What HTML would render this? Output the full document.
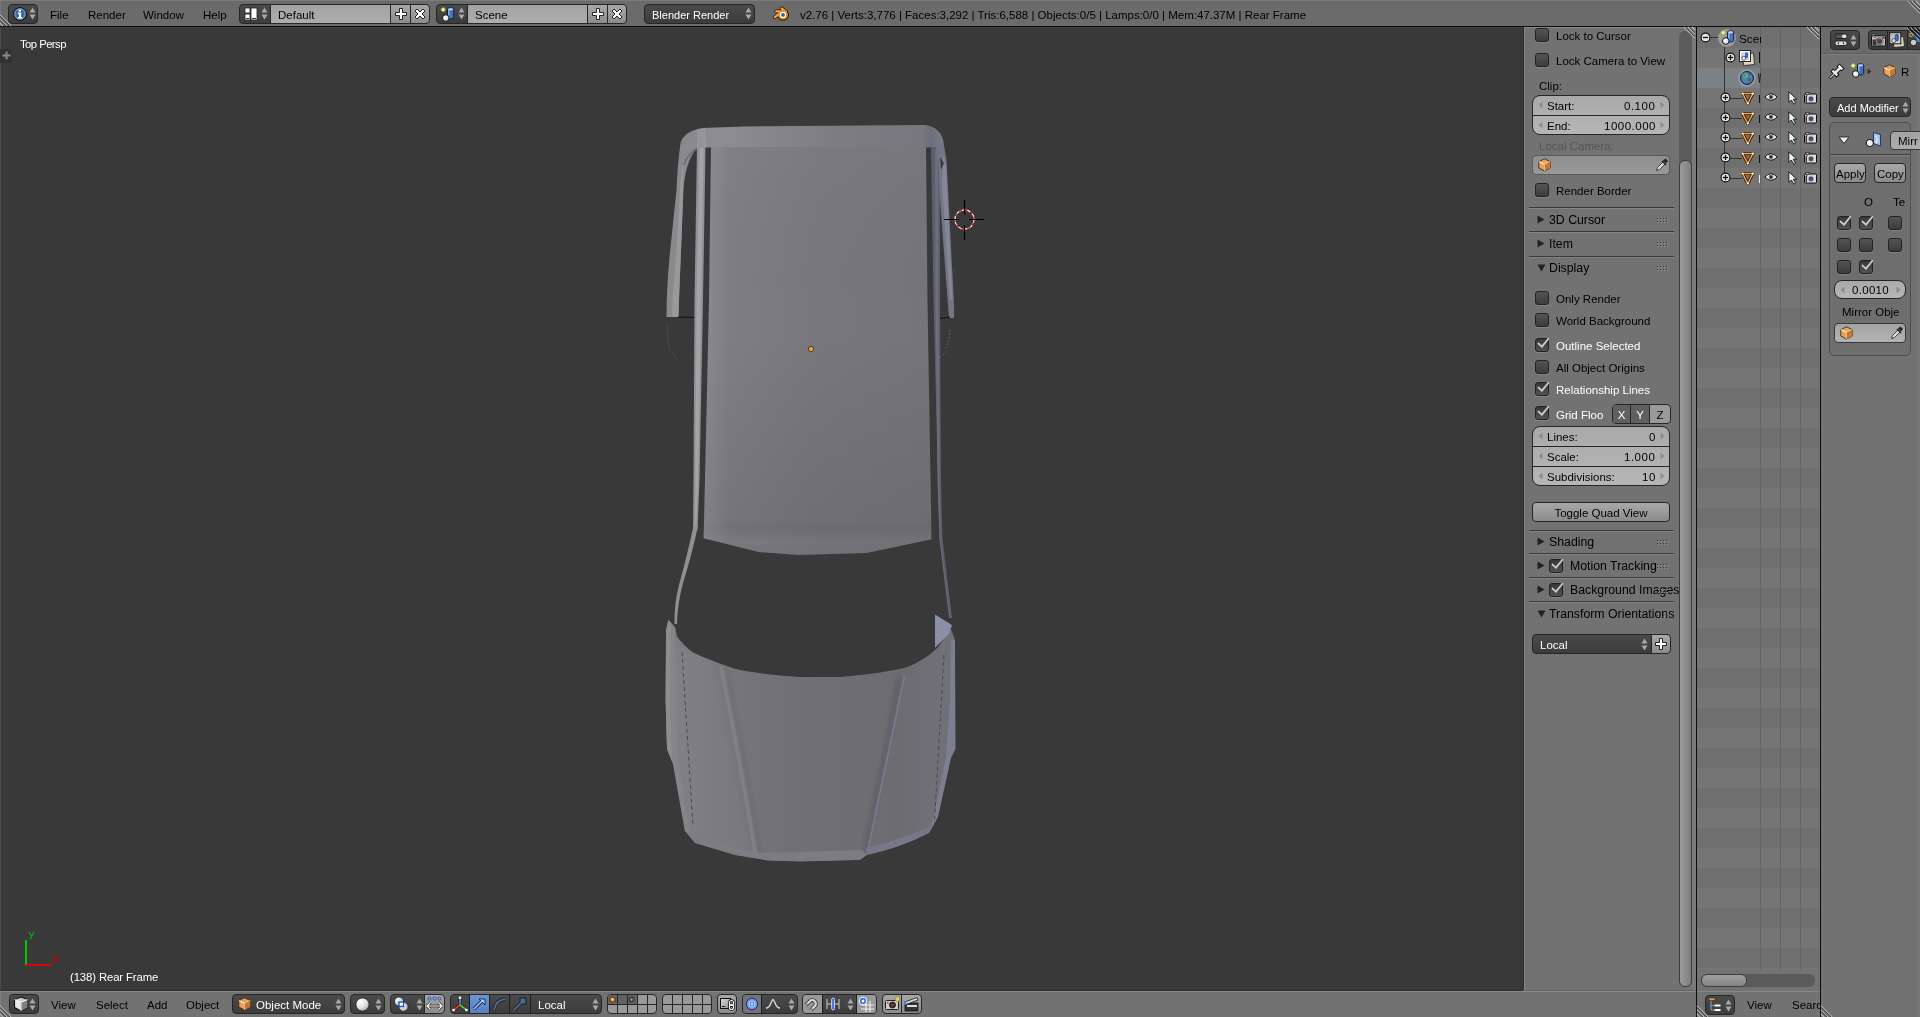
<!DOCTYPE html><html><head><meta charset="utf-8"><style>
*{margin:0;padding:0;box-sizing:border-box}
html,body{width:1920px;height:1017px;overflow:hidden;background:#727272;font-family:"Liberation Sans",sans-serif;color:#000}
.a{position:absolute}
svg{position:absolute;overflow:visible}
.t{position:absolute;white-space:nowrap;line-height:1;will-change:transform}
.menu{background:linear-gradient(#4a4a4a,#3c3c3c);border:1px solid #262626;border-radius:4px}
.txtf{background:linear-gradient(#a3a3a3,#adadad);border:1px solid #262626}
.toolb{background:linear-gradient(#a8a8a8,#8c8c8c);border:1px solid #262626}
.num{background:linear-gradient(#a9a9a9,#b6b6b6);border:1px solid #262626}
</style></head><body>
<div class="a " style="left:0px;top:0px;width:1920px;height:26px;background:#6b6b6b;border-top:1px solid #7b7b7b;border-left:1px solid #7b7b7b"></div>
<div class="a " style="left:0px;top:26px;width:1920px;height:1px;background:#0c0c0c"></div>
<div class="a menu" style="left:8px;top:4px;width:30px;height:20px;"></div>
<svg class="a" style="left:13px;top:7px" width="14" height="14" viewBox="0 0 14 14"><circle cx="7" cy="7" r="6.4" fill="#3d67a3" stroke="#0a0a0a" stroke-width="1"/><circle cx="7" cy="7" r="5.2" fill="none" stroke="#8fb0dc" stroke-width="0.9"/><rect x="5.7" y="2.6" width="2.3" height="2" fill="#fff"/><path d="M4.9 5.6h3.2v4.3h1v1.5H4.9V9.9h1V7.1h-1z" fill="#fff"/></svg>
<svg class="a" style="left:29px;top:7px" width="7" height="13" viewBox="0 0 7 13"><path d="M3.5 0.5L6.5 5.5H0.5z M3.5 12.5L6.5 7.5H0.5z" fill="#a8a8a8"/></svg>
<span class="t" style="left:50px;top:9.97px;font-size:11.5px;color:#000;">File</span>
<span class="t" style="left:88px;top:9.97px;font-size:11.5px;color:#000;">Render</span>
<span class="t" style="left:143px;top:9.97px;font-size:11.5px;color:#000;">Window</span>
<span class="t" style="left:203px;top:9.97px;font-size:11.5px;color:#000;">Help</span>
<div class="a menu" style="left:239px;top:4px;width:32px;height:20px;border-radius:4px 0 0 4px"></div>
<div class="a txtf" style="left:270px;top:4px;width:121px;height:20px;"></div>
<div class="a toolb" style="left:390px;top:4px;width:21px;height:20px;"></div>
<div class="a toolb" style="left:410px;top:4px;width:20px;height:20px;border-radius:0 4px 4px 0"></div>
<svg class="a" style="left:244px;top:7px" width="14" height="14" viewBox="0 0 14 14"><rect x="1" y="1" width="5" height="5" fill="#fff" stroke="#222" stroke-width="0.8"/><rect x="1" y="7" width="5" height="6" fill="#fff" stroke="#222" stroke-width="0.8"/><rect x="7" y="1" width="6" height="12" fill="#fff" stroke="#222" stroke-width="0.8"/><rect x="2" y="11" width="3" height="1" fill="#333"/><rect x="8" y="11" width="4" height="1" fill="#333"/></svg>
<svg class="a" style="left:261px;top:7px" width="7" height="13" viewBox="0 0 7 13"><path d="M3.5 0.5L6.5 5.5H0.5z M3.5 12.5L6.5 7.5H0.5z" fill="#a8a8a8"/></svg>
<span class="t" style="left:278px;top:9.97px;font-size:11.5px;color:#000;">Default</span>
<svg class="a" style="left:394px;top:7px" width="14" height="14" viewBox="0 0 14 14"><path d="M5.5 1.5h3v4h4v3h-4v4h-3v-4h-4v-3h4z" fill="#fff" stroke="#222" stroke-width="1"/></svg>
<svg class="a" style="left:413px;top:7px" width="14" height="14" viewBox="0 0 14 14"><path d="M2 4 L4 2 L7 5 L10 2 L12 4 L9 7 L12 10 L10 12 L7 9 L4 12 L2 10 L5 7z" fill="#fff" stroke="#222" stroke-width="1"/></svg>
<div class="a menu" style="left:436px;top:4px;width:32px;height:20px;border-radius:4px 0 0 4px"></div>
<div class="a txtf" style="left:467px;top:4px;width:121px;height:20px;"></div>
<div class="a toolb" style="left:587px;top:4px;width:21px;height:20px;"></div>
<div class="a toolb" style="left:607px;top:4px;width:20px;height:20px;border-radius:0 4px 4px 0"></div>
<svg class="a" style="left:441px;top:7px" width="14" height="14" viewBox="0 0 14 14"><circle cx="2.2" cy="2.6" r="1.9" fill="#f4f4a0" stroke="#b8b830" stroke-width="0.9"/><path d="M6.5 2.2 Q6.5 0.8 9.6 0.8 Q12.7 0.8 12.7 2.2 V10.6 Q12.7 12 9.6 12 Q6.5 12 6.5 10.6 Z" fill="#3f73c8" stroke="#101830" stroke-width="0.9"/><path d="M7.8 2.5 V10" stroke="#9cc0f0" stroke-width="1.2"/><ellipse cx="9.6" cy="2.3" rx="2.6" ry="1.1" fill="#bcd4f4"/><circle cx="4.8" cy="11" r="3.3" fill="#e6e6e6" stroke="#111" stroke-width="1"/><circle cx="4" cy="10.2" r="1.3" fill="#fff"/></svg>
<svg class="a" style="left:458px;top:7px" width="7" height="13" viewBox="0 0 7 13"><path d="M3.5 0.5L6.5 5.5H0.5z M3.5 12.5L6.5 7.5H0.5z" fill="#a8a8a8"/></svg>
<span class="t" style="left:475px;top:9.97px;font-size:11.5px;color:#000;">Scene</span>
<svg class="a" style="left:591px;top:7px" width="14" height="14" viewBox="0 0 14 14"><path d="M5.5 1.5h3v4h4v3h-4v4h-3v-4h-4v-3h4z" fill="#fff" stroke="#222" stroke-width="1"/></svg>
<svg class="a" style="left:610px;top:7px" width="14" height="14" viewBox="0 0 14 14"><path d="M2 4 L4 2 L7 5 L10 2 L12 4 L9 7 L12 10 L10 12 L7 9 L4 12 L2 10 L5 7z" fill="#fff" stroke="#222" stroke-width="1"/></svg>
<div class="a menu" style="left:644px;top:4px;width:111px;height:20px;"></div>
<span class="t" style="left:652px;top:10.39px;font-size:11px;color:#fff;">Blender Render</span>
<svg class="a" style="left:745px;top:7px" width="7" height="13" viewBox="0 0 7 13"><path d="M3.5 0.5L6.5 5.5H0.5z M3.5 12.5L6.5 7.5H0.5z" fill="#a8a8a8"/></svg>
<svg class="a" style="left:770px;top:3px" width="22" height="22" viewBox="0 0 22 22"><g stroke-linecap="round"><path d="M11.5 5.3 L16 8.6 M6.2 8.3 L12.5 8.4 M4.6 14.3 L9.5 10.3" stroke="#1e1408" stroke-width="3.6"/><circle cx="13" cy="11.9" r="5.9" fill="#1e1408"/><path d="M11.5 5.3 L16 8.6 M6.2 8.3 L12.5 8.4 M4.6 14.3 L9.5 10.3" stroke="#f7a748" stroke-width="2.2"/><circle cx="13" cy="11.9" r="4.9" fill="#f18a1a"/><circle cx="13" cy="11.9" r="3.1" fill="#fff"/><circle cx="13" cy="11.9" r="1.9" fill="#2f5fa8"/></g></svg>
<span class="t" style="left:800px;top:9.97px;font-size:11.5px;color:#000;">v2.76 | Verts:3,776 | Faces:3,292 | Tris:6,588 | Objects:0/5 | Lamps:0/0 | Mem:47.37M | Rear Frame</span>
<svg class="a" style="left:0px;top:14px" width="12" height="12" viewBox="0 0 12 12"><path d="M0 1L11 12M0 5L7 12M0 9L3 12" stroke="#b0b0b0" stroke-width="1.2"/><path d="M0 2.2L9.8 12M0 6.2L5.8 12" stroke="#222" stroke-width="0.8"/></svg>
<svg class="a" style="left:1906px;top:1px" width="14" height="12" viewBox="0 0 14 12"><path d="M2 0L14 12M6 0L14 8M10 0L14 4" stroke="#b0b0b0" stroke-width="1.2"/><path d="M3.2 0L14 10.8M7.2 0L14 6.8" stroke="#222" stroke-width="0.8"/></svg>
<div class="a " style="left:0px;top:27px;width:1523px;height:964px;background:#393939;border-left:1px solid #4b4b4b;border-top:1px solid #3f3f3f;border-bottom:1px solid #2e2e2e"></div>
<span class="t" style="left:20px;top:39.13px;font-size:11.3px;color:#fff;letter-spacing:-0.55px">Top Persp</span>
<div class="a " style="left:0px;top:49px;width:12px;height:14px;background:#313131;border-radius:0 4px 4px 0"></div>
<svg class="a" style="left:2px;top:51px" width="9" height="9" viewBox="0 0 9 9"><path d="M3.5 0.5h2v3h3v2h-3v3h-2v-3h-3v-2h3z" fill="#8a8a8a"/></svg>
<svg class="a" style="left:0;top:0" width="1523" height="990" viewBox="0 0 1523 990">
<defs>
<linearGradient id="roofg" x1="0" x2="1" y1="0" y2="0">
<stop offset="0" stop-color="#8b8b8f"/><stop offset="0.12" stop-color="#7d7d82"/><stop offset="0.5" stop-color="#77777c"/><stop offset="1" stop-color="#747479"/></linearGradient>
<linearGradient id="roofv" x1="0" x2="0" y1="0" y2="1">
<stop offset="0" stop-color="#000" stop-opacity="0"/><stop offset="0.85" stop-color="#000" stop-opacity="0"/><stop offset="1" stop-color="#fff" stop-opacity="0.06"/></linearGradient>
<linearGradient id="hoodg" x1="0" x2="1" y1="0" y2="0">
<stop offset="0" stop-color="#7d7d82"/><stop offset="0.2" stop-color="#76767b"/><stop offset="0.5" stop-color="#6f6f74"/><stop offset="0.8" stop-color="#6c6c71"/><stop offset="1" stop-color="#717178"/></linearGradient>
<linearGradient id="bandg" x1="0" x2="1" y1="0" y2="0">
<stop offset="0" stop-color="#88888c"/><stop offset="0.15" stop-color="#8e8e92"/><stop offset="0.6" stop-color="#7c7c81"/><stop offset="0.92" stop-color="#77777d"/><stop offset="0.95" stop-color="#6c6e7c"/><stop offset="1" stop-color="#7a7c8a"/></linearGradient>
<linearGradient id="roofb" x1="0" x2="0" y1="0" y2="1"><stop offset="0" stop-color="#000" stop-opacity="0"/><stop offset="0.15" stop-color="#000" stop-opacity="0.03"/><stop offset="0.55" stop-color="#fff" stop-opacity="0.04"/><stop offset="1" stop-color="#fff" stop-opacity="0.02"/></linearGradient><linearGradient id="roofv2" x1="0" x2="0" y1="0" y2="1"><stop offset="0" stop-color="#fff" stop-opacity="0.02"/><stop offset="0.45" stop-color="#000" stop-opacity="0"/><stop offset="0.93" stop-color="#000" stop-opacity="0.07"/><stop offset="1" stop-color="#000" stop-opacity="0.07"/></linearGradient></defs>
<!-- roof band -->
<path d="M680.5,143 Q684,131 703,128 L743,126.4 L925,125 Q941,127 943.5,142.5 L940,147.5 L697,147.5 Z" fill="url(#bandg)"/>
<path d="M697,129 L706,128 L706,147.5 L697,147.5 Z" fill="#9c9ca0" fill-opacity="0.6"/>
<!-- main roof -->
<path d="M711,147 L926,147 L927.5,300 L931.5,539.3 L866.8,553 L798,555 L758.6,552 L703.6,538.3 L705,480 L709,300 Z" fill="url(#roofg)"/>
<path d="M711,147 L926,147 L927.5,300 L931,539 L866.8,553 L798,555 L758.6,552 L703.6,538.3 L705,480 L709,300 Z" fill="url(#roofv2)"/>
<path d="M703.6,522 L931,522 L931.5,539.3 L866.8,553 L798,555 L758.6,552 L703.6,538.3 Z" fill="url(#roofb)"/>
<!-- left outer pillar -->
<path d="M680.5,143 Q677.5,165 676.5,190 L669.5,257 Q666.5,290 666.5,317 L678.5,317 L679,300 L683,200 Q683.5,163 697,148 L697,146 Z" fill="#8a8a8e"/>
<path d="M683.5,160 L683,200 L679,300 L678.5,317 L672,317 L673,290 L676,257 L680,190 Q681,170 683.5,160 Z" fill="#9c9ca0" fill-opacity="0.8"/>
<path d="M683.5,165 Q688,154 697,148.5" stroke="#6a6c7a" stroke-width="1.5" fill="none"/>
<line x1="678" y1="317" x2="695" y2="317.5" stroke="#111" stroke-width="1"/>
<path d="M667,323 L668.5,345 L670.5,351 L678,360" stroke="#4a4a4a" stroke-width="1" fill="none"/><path d="M666.5,317 L666.5,323 L672,317 Z" fill="#393939"/>
<!-- left inner bar -->
<path d="M697,147 L705.5,147 L703,300 L699.5,480 L697.5,530 L693,530 L693.5,480 L694.5,300 Z" fill="#929296"/>
<path d="M699.5,148 L703.5,148 L701,300 L698,480 L696,530 L695,530 L696.5,300 Z" fill="#a4a4a8"/>
<path d="M693.5,526 L698,526 Q691,558 683,583 Q677.5,603 677,624 L674.5,624 Q674,603 679.5,583 Q686.5,558 693.5,526 Z" fill="#909094"/>
<!-- right pillars -->
<path d="M931,147 L940,147 L940,300 L941,480 L942.5,539 L952,618 L949,618 L939.5,539 L938,480 L933.5,300 Z" fill="#5c5e6c"/>
<path d="M935,150 L938,150 L938.5,300 L939.5,480 L940.5,539 L950,618 L949.5,618 L939.5,539 L937.5,480 L935.5,300 Z" fill="#6c6e7e"/>
<path d="M936,147.5 L943.5,142.5 L946.5,160 L954,305 L954,318 L949,318 L939.6,194 L938.6,160 Z" fill="#747686"/>
<path d="M943,155 L946,165 L952.5,300 L950,300 L942,185 Z" fill="#8a8c9c" fill-opacity="0.8"/>
<path d="M940,157 L944,163 L941,170 Z" fill="#3a3a3a"/>
<line x1="940" y1="318.5" x2="950" y2="317" stroke="#111" stroke-width="1"/>
<path d="M940,357 L947,351 M950,330 L949,340 L946,348" stroke="#7d7f90" stroke-width="0.8" fill="none" stroke-dasharray="1.5 2"/>
<!-- hood -->
<filter id="bl2" x="-50%" y="-10%" width="200%" height="120%"><feGaussianBlur stdDeviation="2.2"/></filter>
<filter id="bl1" x="-50%" y="-10%" width="200%" height="120%"><feGaussianBlur stdDeviation="1"/></filter>
<clipPath id="hoodclip"><path d="M668.4,620 L675,627 L677,636.5 Q684,646 692.8,652.3 Q700,656 707,658.6 Q720,664 735,668.8 Q760,674.5 800,677 L840,677 Q880,674 906,667.6 Q925,660 937.6,647.7 L951,629 L955,640 L955.5,749 L951,758 L938,817 L929,833 Q900,848 867,855 L860,860 L800,861.5 L768,860.5 L735,855 L695,843 L685,831 L673,764 L667,749 L665.5,700 L666,630 Z"/></clipPath>
<path d="M668.4,620 L675,627 L677,636.5 Q684,646 692.8,652.3 Q700,656 707,658.6 Q720,664 735,668.8 Q760,674.5 800,677 L840,677 Q880,674 906,667.6 Q925,660 937.6,647.7 L951,629 L955,640 L955.5,749 L951,758 L938,817 L929,833 Q900,848 867,855 L860,860 L800,861.5 L768,860.5 L735,855 L695,843 L685,831 L673,764 L667,749 L665.5,700 L666,630 Z" fill="url(#hoodg)"/>
<g clip-path="url(#hoodclip)">
<path d="M712,660 L752,860 L680,860 L660,640 Z" fill="#fff" fill-opacity="0.03" filter="url(#bl2)"/>
<path d="M721,666 Q740,760 756,856" stroke="#8a8a8e" stroke-width="2.5" fill="none" filter="url(#bl1)" stroke-opacity="0.9"/>
<path d="M726,666 Q745,760 761,856" stroke="#000" stroke-width="3" fill="none" filter="url(#bl2)" stroke-opacity="0.08"/>
<path d="M900,676 Q884,760 864,855" stroke="#000" stroke-width="5" fill="none" filter="url(#bl2)" stroke-opacity="0.12"/>
<path d="M904.5,676 Q887,760 868,850" stroke="#7c7f94" stroke-width="1.4" fill="none"/>
<path d="M668,619 L675,628 L676,700 L678,764 L690,833 L684,833 L673,764 L667,749 L665.5,700 L666,630 Z" fill="#858589" fill-opacity="0.9"/>
<path d="M668,619 L671,623 L670,700 L672,764 L680,830 L678,830 L669,764 L666,749 L665.5,700 L666,630 Z" fill="#909094" fill-opacity="0.8"/>
<path d="M685,831 L695,843 L735,855 L768,860.5 L800,861.5 L860,860 L867,855 L862,850 L760,853 L740,849 L700,836 Z" fill="#7c7c81"/>
<path d="M867,855 Q900,848 929,833 L938,817 L931,826 Q900,840 866,848 Z" fill="#767889"/>
<path d="M951,640 L955,640 L955.5,749 L951,758 L938,817 L929,833 L934,815 L946,757 L950,700 Z" fill="#80839a" fill-opacity="0.75"/>
</g>
<path d="M682,652 L693,826" stroke="#4a4a4e" stroke-width="1" stroke-dasharray="4 3" fill="none"/>
<path d="M944,655 L934,830" stroke="#4a4a50" stroke-width="1" stroke-dasharray="4 3" fill="none"/>
<path d="M935,614.5 L952,625 L949,634 L935,647.7 Z" fill="#8a8ea8"/>
<!-- origin -->
<circle cx="811" cy="349" r="2.6" fill="#f1a43c" stroke="#2a2a2a" stroke-width="0.8"/>
<!-- 3D cursor -->
<circle cx="964.5" cy="219.5" r="9.6" fill="none" stroke="#fff" stroke-width="1.1"/>
<circle cx="964.5" cy="219.5" r="9.6" fill="none" stroke="#f00000" stroke-width="1.1" stroke-dasharray="3.016 3.016" transform="rotate(-90 964.5 219.5)"/>
<path d="M964.5,200 V214.5 M964.5,225 V240 M944,219.5 H959 M969,219.5 H984" stroke="#000" stroke-width="1.2"/>
</svg>
<svg class="a" style="left:20px;top:928px" width="45" height="42" viewBox="0 0 45 42"><line x1="6" y1="12" x2="6" y2="37" stroke="#00c800" stroke-width="2"/><line x1="6" y1="37" x2="31" y2="37" stroke="#e00000" stroke-width="2"/><path d="M9 4 L11.5 8 M14 4 L10 11" stroke="#00c000" stroke-width="1.1" fill="none"/><path d="M33 28 L38 35 M38 28 L33 35" stroke="#d00000" stroke-width="1.1"/></svg>
<span class="t" style="left:70px;top:972.13px;font-size:11.3px;color:#fff;letter-spacing:-0.1px">(138) Rear Frame</span>
<div class="a " style="left:1523px;top:27px;width:173px;height:963px;background:#727272;border-left:1px solid #8a8a8a"></div>
<div class="a " style="left:1523px;top:27px;width:1px;height:963px;background:#2e2e2e"></div>
<div class="a " style="left:1524px;top:27px;width:172px;height:964px;background:#727272;border-left:1px solid #858585;border-top:1px solid #888;border-bottom:1px solid #666"></div>
<div class="a " style="left:1535px;top:28px;width:14px;height:14px;background:linear-gradient(#545454,#3c3c3c);border:1px solid #222;border-radius:3px;box-shadow:0 1px 0 rgba(255,255,255,0.13)"></div>
<span class="t" style="left:1556px;top:30.97px;font-size:11.5px;color:#000;">Lock to Cursor</span>
<div class="a " style="left:1535px;top:53px;width:14px;height:14px;background:linear-gradient(#545454,#3c3c3c);border:1px solid #222;border-radius:3px;box-shadow:0 1px 0 rgba(255,255,255,0.13)"></div>
<span class="t" style="left:1556px;top:55.97px;font-size:11.5px;color:#000;">Lock Camera to View</span>
<span class="t" style="left:1539px;top:80.97px;font-size:11.5px;color:#000;">Clip:</span>
<div class="a num" style="left:1532px;top:95px;width:138px;height:40px;border-radius:8px;overflow:hidden"></div>
<svg class="a" style="left:1538px;top:101px" width="5" height="8" viewBox="0 0 5 8"><path d="M4.5 0.5V7.5L0.5 4Z" fill="#8c8c8c"/></svg>
<svg class="a" style="left:1660px;top:101px" width="5" height="8" viewBox="0 0 5 8"><path d="M0.5 0.5V7.5L4.5 4Z" fill="#8c8c8c"/></svg>
<span class="t" style="left:1547px;top:100.77px;font-size:11.5px;color:#000;">Start:</span>
<span class="t" style="right:265px;top:100.77px;font-size:11.5px;color:#000;letter-spacing:0.5px;margin-right:-0.5px">0.100</span>
<div class="a " style="left:1532px;top:115px;width:138px;height:1px;background:#262626"></div>
<svg class="a" style="left:1538px;top:121px" width="5" height="8" viewBox="0 0 5 8"><path d="M4.5 0.5V7.5L0.5 4Z" fill="#8c8c8c"/></svg>
<svg class="a" style="left:1660px;top:121px" width="5" height="8" viewBox="0 0 5 8"><path d="M0.5 0.5V7.5L4.5 4Z" fill="#8c8c8c"/></svg>
<span class="t" style="left:1547px;top:120.77px;font-size:11.5px;color:#000;">End:</span>
<span class="t" style="right:265px;top:120.77px;font-size:11.5px;color:#000;letter-spacing:0.5px;margin-right:-0.5px">1000.000</span>
<span class="t" style="left:1539px;top:140.97px;font-size:11.5px;color:#555;">Local Camera:</span>
<div class="a " style="left:1532px;top:155px;width:138px;height:20px;background:linear-gradient(#8e8e8e,#999);border:1px solid #5a5a5a;border-radius:4px"></div>
<svg class="a" style="left:1538px;top:158px" width="13" height="14" viewBox="0 0 13 14"><path d="M6.5 0.8 L12.2 3.6 V10 L6.5 13 L0.8 10 V3.6 Z" fill="#e8a25a" stroke="#3a2a1a" stroke-width="0.9"/><path d="M0.8 3.6 L6.5 6.4 L12.2 3.6" fill="none" stroke="#fff" stroke-width="0.9"/><path d="M6.5 6.4 V13" stroke="#fff" stroke-width="0.9"/><path d="M6.5 6.4 L12.2 3.6 V10 L6.5 13Z" fill="#c47a2e"/></svg>
<svg class="a" style="left:1655px;top:158px" width="14" height="14" viewBox="0 0 14 14"><path d="M1.5 12.5 L2.5 9.5 L8 4 L10 6 L4.5 11.5 Z" fill="#ddd" stroke="#222" stroke-width="0.8"/><path d="M8 2.5 L10.5 0.5 L13 3 L11 5.5 Z" fill="#222"/><path d="M7 3 L11 7" stroke="#222" stroke-width="1.6"/></svg>
<div class="a " style="left:1535px;top:183px;width:14px;height:14px;background:linear-gradient(#545454,#3c3c3c);border:1px solid #222;border-radius:3px;box-shadow:0 1px 0 rgba(255,255,255,0.13)"></div>
<span class="t" style="left:1556px;top:185.97px;font-size:11.5px;color:#000;">Render Border</span>
<div class="a " style="left:1529px;top:207px;width:145px;height:1px;background:#3a3a3a;box-shadow:0 1px 0 #848484"></div>
<svg class="a" style="left:1537px;top:215px" width="8" height="9" viewBox="0 0 8 9"><path d="M0.5 0.5V8.5L7.5 4.5Z" fill="#222"/></svg>
<span class="t" style="left:1549px;top:214.29px;font-size:12.3px;color:#000;">3D Cursor</span>
<svg class="a" style="left:1657px;top:218px" width="12" height="6" viewBox="0 0 12 6"><rect x="0" y="0" width="1" height="1" fill="#3a3a3a"/><rect x="1" y="1" width="1" height="1" fill="#9a9a9a"/><rect x="0" y="3" width="1" height="1" fill="#3a3a3a"/><rect x="1" y="4" width="1" height="1" fill="#9a9a9a"/><rect x="3" y="0" width="1" height="1" fill="#3a3a3a"/><rect x="4" y="1" width="1" height="1" fill="#9a9a9a"/><rect x="3" y="3" width="1" height="1" fill="#3a3a3a"/><rect x="4" y="4" width="1" height="1" fill="#9a9a9a"/><rect x="6" y="0" width="1" height="1" fill="#3a3a3a"/><rect x="7" y="1" width="1" height="1" fill="#9a9a9a"/><rect x="6" y="3" width="1" height="1" fill="#3a3a3a"/><rect x="7" y="4" width="1" height="1" fill="#9a9a9a"/><rect x="9" y="0" width="1" height="1" fill="#3a3a3a"/><rect x="10" y="1" width="1" height="1" fill="#9a9a9a"/><rect x="9" y="3" width="1" height="1" fill="#3a3a3a"/><rect x="10" y="4" width="1" height="1" fill="#9a9a9a"/></svg>
<div class="a " style="left:1529px;top:231px;width:145px;height:1px;background:#3a3a3a;box-shadow:0 1px 0 #848484"></div>
<svg class="a" style="left:1537px;top:239px" width="8" height="9" viewBox="0 0 8 9"><path d="M0.5 0.5V8.5L7.5 4.5Z" fill="#222"/></svg>
<span class="t" style="left:1549px;top:238.29px;font-size:12.3px;color:#000;">Item</span>
<svg class="a" style="left:1657px;top:242px" width="12" height="6" viewBox="0 0 12 6"><rect x="0" y="0" width="1" height="1" fill="#3a3a3a"/><rect x="1" y="1" width="1" height="1" fill="#9a9a9a"/><rect x="0" y="3" width="1" height="1" fill="#3a3a3a"/><rect x="1" y="4" width="1" height="1" fill="#9a9a9a"/><rect x="3" y="0" width="1" height="1" fill="#3a3a3a"/><rect x="4" y="1" width="1" height="1" fill="#9a9a9a"/><rect x="3" y="3" width="1" height="1" fill="#3a3a3a"/><rect x="4" y="4" width="1" height="1" fill="#9a9a9a"/><rect x="6" y="0" width="1" height="1" fill="#3a3a3a"/><rect x="7" y="1" width="1" height="1" fill="#9a9a9a"/><rect x="6" y="3" width="1" height="1" fill="#3a3a3a"/><rect x="7" y="4" width="1" height="1" fill="#9a9a9a"/><rect x="9" y="0" width="1" height="1" fill="#3a3a3a"/><rect x="10" y="1" width="1" height="1" fill="#9a9a9a"/><rect x="9" y="3" width="1" height="1" fill="#3a3a3a"/><rect x="10" y="4" width="1" height="1" fill="#9a9a9a"/></svg>
<div class="a " style="left:1529px;top:256px;width:145px;height:1px;background:#3a3a3a;box-shadow:0 1px 0 #848484"></div>
<svg class="a" style="left:1537px;top:264px" width="9" height="8" viewBox="0 0 9 8"><path d="M0.5 0.5H8.5L4.5 7.5Z" fill="#222"/></svg>
<span class="t" style="left:1549px;top:262.29px;font-size:12.3px;color:#000;">Display</span>
<svg class="a" style="left:1657px;top:266px" width="12" height="6" viewBox="0 0 12 6"><rect x="0" y="0" width="1" height="1" fill="#3a3a3a"/><rect x="1" y="1" width="1" height="1" fill="#9a9a9a"/><rect x="0" y="3" width="1" height="1" fill="#3a3a3a"/><rect x="1" y="4" width="1" height="1" fill="#9a9a9a"/><rect x="3" y="0" width="1" height="1" fill="#3a3a3a"/><rect x="4" y="1" width="1" height="1" fill="#9a9a9a"/><rect x="3" y="3" width="1" height="1" fill="#3a3a3a"/><rect x="4" y="4" width="1" height="1" fill="#9a9a9a"/><rect x="6" y="0" width="1" height="1" fill="#3a3a3a"/><rect x="7" y="1" width="1" height="1" fill="#9a9a9a"/><rect x="6" y="3" width="1" height="1" fill="#3a3a3a"/><rect x="7" y="4" width="1" height="1" fill="#9a9a9a"/><rect x="9" y="0" width="1" height="1" fill="#3a3a3a"/><rect x="10" y="1" width="1" height="1" fill="#9a9a9a"/><rect x="9" y="3" width="1" height="1" fill="#3a3a3a"/><rect x="10" y="4" width="1" height="1" fill="#9a9a9a"/></svg>
<div class="a " style="left:1535px;top:291px;width:14px;height:14px;background:linear-gradient(#545454,#3c3c3c);border:1px solid #222;border-radius:3px;box-shadow:0 1px 0 rgba(255,255,255,0.13)"></div>
<span class="t" style="left:1556px;top:293.97px;font-size:11.5px;color:#000;">Only Render</span>
<div class="a " style="left:1535px;top:313px;width:14px;height:14px;background:linear-gradient(#545454,#3c3c3c);border:1px solid #222;border-radius:3px;box-shadow:0 1px 0 rgba(255,255,255,0.13)"></div>
<span class="t" style="left:1556px;top:315.97px;font-size:11.5px;color:#000;">World Background</span>
<div class="a " style="left:1535px;top:338px;width:14px;height:14px;background:linear-gradient(#383838,#525252);border:1px solid #222;border-radius:3px;box-shadow:0 1px 0 rgba(255,255,255,0.13)"></div>
<svg class="a" style="left:1535px;top:338px" width="14" height="14" viewBox="0 0 14 14"><path d="M3.6 5.6 L7 8.6 L13.2 1" fill="none" stroke="#cccccc" stroke-width="1.8" stroke-linecap="square" stroke-linejoin="miter"/></svg>
<span class="t" style="left:1556px;top:340.97px;font-size:11.5px;color:#fff;">Outline Selected</span>
<div class="a " style="left:1535px;top:360px;width:14px;height:14px;background:linear-gradient(#545454,#3c3c3c);border:1px solid #222;border-radius:3px;box-shadow:0 1px 0 rgba(255,255,255,0.13)"></div>
<span class="t" style="left:1556px;top:362.97px;font-size:11.5px;color:#000;">All Object Origins</span>
<div class="a " style="left:1535px;top:382px;width:14px;height:14px;background:linear-gradient(#383838,#525252);border:1px solid #222;border-radius:3px;box-shadow:0 1px 0 rgba(255,255,255,0.13)"></div>
<svg class="a" style="left:1535px;top:382px" width="14" height="14" viewBox="0 0 14 14"><path d="M3.6 5.6 L7 8.6 L13.2 1" fill="none" stroke="#cccccc" stroke-width="1.8" stroke-linecap="square" stroke-linejoin="miter"/></svg>
<span class="t" style="left:1556px;top:384.97px;font-size:11.5px;color:#fff;">Relationship Lines</span>
<div class="a " style="left:1535px;top:406px;width:14px;height:14px;background:linear-gradient(#383838,#525252);border:1px solid #222;border-radius:3px;box-shadow:0 1px 0 rgba(255,255,255,0.13)"></div>
<svg class="a" style="left:1535px;top:406px" width="14" height="14" viewBox="0 0 14 14"><path d="M3.6 5.6 L7 8.6 L13.2 1" fill="none" stroke="#cccccc" stroke-width="1.8" stroke-linecap="square" stroke-linejoin="miter"/></svg>
<span class="t" style="left:1556px;top:409.97px;font-size:11.5px;color:#fff;">Grid Floo</span>
<div class="a " style="left:1612px;top:404px;width:59px;height:20px;background:#999;border:1px solid #262626;border-radius:4px;overflow:hidden"></div>
<div class="a " style="left:1613px;top:405px;width:37px;height:18px;background:#606060;border-radius:3px 0 0 3px"></div>
<div class="a " style="left:1630px;top:405px;width:1px;height:18px;background:#262626"></div>
<div class="a " style="left:1649px;top:405px;width:1px;height:18px;background:#262626"></div>
<span class="t" style="left:1613px;width:17px;text-align:center;top:409.97px;font-size:11.5px;color:#fff;">X</span>
<span class="t" style="left:1631px;width:18px;text-align:center;top:409.97px;font-size:11.5px;color:#fff;">Y</span>
<span class="t" style="left:1650px;width:20px;text-align:center;top:409.97px;font-size:11.5px;color:#000;">Z</span>
<div class="a num" style="left:1532px;top:426px;width:138px;height:60px;border-radius:8px;overflow:hidden"></div>
<svg class="a" style="left:1538px;top:432px" width="5" height="8" viewBox="0 0 5 8"><path d="M4.5 0.5V7.5L0.5 4Z" fill="#8c8c8c"/></svg>
<svg class="a" style="left:1660px;top:432px" width="5" height="8" viewBox="0 0 5 8"><path d="M0.5 0.5V7.5L4.5 4Z" fill="#8c8c8c"/></svg>
<span class="t" style="left:1547px;top:431.77px;font-size:11.5px;color:#000;">Lines:</span>
<span class="t" style="right:265px;top:431.77px;font-size:11.5px;color:#000;letter-spacing:0.5px;margin-right:-0.5px">0</span>
<div class="a " style="left:1532px;top:446px;width:138px;height:1px;background:#262626"></div>
<svg class="a" style="left:1538px;top:452px" width="5" height="8" viewBox="0 0 5 8"><path d="M4.5 0.5V7.5L0.5 4Z" fill="#8c8c8c"/></svg>
<svg class="a" style="left:1660px;top:452px" width="5" height="8" viewBox="0 0 5 8"><path d="M0.5 0.5V7.5L4.5 4Z" fill="#8c8c8c"/></svg>
<span class="t" style="left:1547px;top:451.77px;font-size:11.5px;color:#000;">Scale:</span>
<span class="t" style="right:265px;top:451.77px;font-size:11.5px;color:#000;letter-spacing:0.5px;margin-right:-0.5px">1.000</span>
<div class="a " style="left:1532px;top:466px;width:138px;height:1px;background:#262626"></div>
<svg class="a" style="left:1538px;top:472px" width="5" height="8" viewBox="0 0 5 8"><path d="M4.5 0.5V7.5L0.5 4Z" fill="#8c8c8c"/></svg>
<svg class="a" style="left:1660px;top:472px" width="5" height="8" viewBox="0 0 5 8"><path d="M0.5 0.5V7.5L4.5 4Z" fill="#8c8c8c"/></svg>
<span class="t" style="left:1547px;top:471.77px;font-size:11.5px;color:#000;">Subdivisions:</span>
<span class="t" style="right:265px;top:471.77px;font-size:11.5px;color:#000;letter-spacing:0.5px;margin-right:-0.5px">10</span>
<div class="a toolb" style="left:1532px;top:502px;width:138px;height:20px;border-radius:4px"></div>
<span class="t" style="left:1532px;width:138px;text-align:center;top:507.97px;font-size:11.5px;color:#000;">Toggle Quad View</span>
<div class="a " style="left:1529px;top:530px;width:145px;height:1px;background:#3a3a3a;box-shadow:0 1px 0 #848484"></div>
<svg class="a" style="left:1537px;top:537px" width="8" height="9" viewBox="0 0 8 9"><path d="M0.5 0.5V8.5L7.5 4.5Z" fill="#222"/></svg>
<span class="t" style="left:1549px;top:536.29px;font-size:12.3px;color:#000;">Shading</span>
<svg class="a" style="left:1657px;top:540px" width="12" height="6" viewBox="0 0 12 6"><rect x="0" y="0" width="1" height="1" fill="#3a3a3a"/><rect x="1" y="1" width="1" height="1" fill="#9a9a9a"/><rect x="0" y="3" width="1" height="1" fill="#3a3a3a"/><rect x="1" y="4" width="1" height="1" fill="#9a9a9a"/><rect x="3" y="0" width="1" height="1" fill="#3a3a3a"/><rect x="4" y="1" width="1" height="1" fill="#9a9a9a"/><rect x="3" y="3" width="1" height="1" fill="#3a3a3a"/><rect x="4" y="4" width="1" height="1" fill="#9a9a9a"/><rect x="6" y="0" width="1" height="1" fill="#3a3a3a"/><rect x="7" y="1" width="1" height="1" fill="#9a9a9a"/><rect x="6" y="3" width="1" height="1" fill="#3a3a3a"/><rect x="7" y="4" width="1" height="1" fill="#9a9a9a"/><rect x="9" y="0" width="1" height="1" fill="#3a3a3a"/><rect x="10" y="1" width="1" height="1" fill="#9a9a9a"/><rect x="9" y="3" width="1" height="1" fill="#3a3a3a"/><rect x="10" y="4" width="1" height="1" fill="#9a9a9a"/></svg>
<div class="a " style="left:1529px;top:553px;width:145px;height:1px;background:#3a3a3a;box-shadow:0 1px 0 #848484"></div>
<svg class="a" style="left:1537px;top:561px" width="8" height="9" viewBox="0 0 8 9"><path d="M0.5 0.5V8.5L7.5 4.5Z" fill="#222"/></svg>
<div class="a " style="left:1549px;top:559px;width:14px;height:14px;background:linear-gradient(#383838,#525252);border:1px solid #222;border-radius:3px;box-shadow:0 1px 0 rgba(255,255,255,0.13)"></div>
<svg class="a" style="left:1549px;top:559px" width="14" height="14" viewBox="0 0 14 14"><path d="M3.6 5.6 L7 8.6 L13.2 1" fill="none" stroke="#cccccc" stroke-width="1.8" stroke-linecap="square" stroke-linejoin="miter"/></svg>
<span class="t" style="left:1570px;top:560.29px;font-size:12.3px;color:#000;">Motion Tracking</span>
<svg class="a" style="left:1657px;top:564px" width="12" height="6" viewBox="0 0 12 6"><rect x="0" y="0" width="1" height="1" fill="#3a3a3a"/><rect x="1" y="1" width="1" height="1" fill="#9a9a9a"/><rect x="0" y="3" width="1" height="1" fill="#3a3a3a"/><rect x="1" y="4" width="1" height="1" fill="#9a9a9a"/><rect x="3" y="0" width="1" height="1" fill="#3a3a3a"/><rect x="4" y="1" width="1" height="1" fill="#9a9a9a"/><rect x="3" y="3" width="1" height="1" fill="#3a3a3a"/><rect x="4" y="4" width="1" height="1" fill="#9a9a9a"/><rect x="6" y="0" width="1" height="1" fill="#3a3a3a"/><rect x="7" y="1" width="1" height="1" fill="#9a9a9a"/><rect x="6" y="3" width="1" height="1" fill="#3a3a3a"/><rect x="7" y="4" width="1" height="1" fill="#9a9a9a"/><rect x="9" y="0" width="1" height="1" fill="#3a3a3a"/><rect x="10" y="1" width="1" height="1" fill="#9a9a9a"/><rect x="9" y="3" width="1" height="1" fill="#3a3a3a"/><rect x="10" y="4" width="1" height="1" fill="#9a9a9a"/></svg>
<div class="a " style="left:1529px;top:577px;width:145px;height:1px;background:#3a3a3a;box-shadow:0 1px 0 #848484"></div>
<svg class="a" style="left:1537px;top:585px" width="8" height="9" viewBox="0 0 8 9"><path d="M0.5 0.5V8.5L7.5 4.5Z" fill="#222"/></svg>
<div class="a " style="left:1549px;top:583px;width:14px;height:14px;background:linear-gradient(#383838,#525252);border:1px solid #222;border-radius:3px;box-shadow:0 1px 0 rgba(255,255,255,0.13)"></div>
<svg class="a" style="left:1549px;top:583px" width="14" height="14" viewBox="0 0 14 14"><path d="M3.6 5.6 L7 8.6 L13.2 1" fill="none" stroke="#cccccc" stroke-width="1.8" stroke-linecap="square" stroke-linejoin="miter"/></svg>
<span class="t" style="left:1570px;top:584.29px;font-size:12.3px;color:#000;">Background Images</span>
<svg class="a" style="left:1657px;top:588px" width="12" height="6" viewBox="0 0 12 6"><rect x="0" y="0" width="1" height="1" fill="#3a3a3a"/><rect x="1" y="1" width="1" height="1" fill="#9a9a9a"/><rect x="0" y="3" width="1" height="1" fill="#3a3a3a"/><rect x="1" y="4" width="1" height="1" fill="#9a9a9a"/><rect x="3" y="0" width="1" height="1" fill="#3a3a3a"/><rect x="4" y="1" width="1" height="1" fill="#9a9a9a"/><rect x="3" y="3" width="1" height="1" fill="#3a3a3a"/><rect x="4" y="4" width="1" height="1" fill="#9a9a9a"/><rect x="6" y="0" width="1" height="1" fill="#3a3a3a"/><rect x="7" y="1" width="1" height="1" fill="#9a9a9a"/><rect x="6" y="3" width="1" height="1" fill="#3a3a3a"/><rect x="7" y="4" width="1" height="1" fill="#9a9a9a"/><rect x="9" y="0" width="1" height="1" fill="#3a3a3a"/><rect x="10" y="1" width="1" height="1" fill="#9a9a9a"/><rect x="9" y="3" width="1" height="1" fill="#3a3a3a"/><rect x="10" y="4" width="1" height="1" fill="#9a9a9a"/></svg>
<div class="a " style="left:1529px;top:601px;width:145px;height:1px;background:#3a3a3a;box-shadow:0 1px 0 #848484"></div>
<svg class="a" style="left:1537px;top:610px" width="9" height="8" viewBox="0 0 9 8"><path d="M0.5 0.5H8.5L4.5 7.5Z" fill="#222"/></svg>
<span class="t" style="left:1549px;top:608.29px;font-size:12.3px;color:#000;">Transform Orientations</span>
<svg class="a" style="left:1657px;top:612px" width="12" height="6" viewBox="0 0 12 6"><rect x="0" y="0" width="1" height="1" fill="#3a3a3a"/><rect x="1" y="1" width="1" height="1" fill="#9a9a9a"/><rect x="0" y="3" width="1" height="1" fill="#3a3a3a"/><rect x="1" y="4" width="1" height="1" fill="#9a9a9a"/><rect x="3" y="0" width="1" height="1" fill="#3a3a3a"/><rect x="4" y="1" width="1" height="1" fill="#9a9a9a"/><rect x="3" y="3" width="1" height="1" fill="#3a3a3a"/><rect x="4" y="4" width="1" height="1" fill="#9a9a9a"/><rect x="6" y="0" width="1" height="1" fill="#3a3a3a"/><rect x="7" y="1" width="1" height="1" fill="#9a9a9a"/><rect x="6" y="3" width="1" height="1" fill="#3a3a3a"/><rect x="7" y="4" width="1" height="1" fill="#9a9a9a"/><rect x="9" y="0" width="1" height="1" fill="#3a3a3a"/><rect x="10" y="1" width="1" height="1" fill="#9a9a9a"/><rect x="9" y="3" width="1" height="1" fill="#3a3a3a"/><rect x="10" y="4" width="1" height="1" fill="#9a9a9a"/></svg>
<div class="a menu" style="left:1532px;top:634px;width:120px;height:20px;border-radius:4px 0 0 4px"></div>
<div class="a toolb" style="left:1651px;top:634px;width:20px;height:20px;border-radius:0 4px 4px 0"></div>
<span class="t" style="left:1540px;top:639.97px;font-size:11.5px;color:#fff;">Local</span>
<svg class="a" style="left:1641px;top:638px" width="7" height="13" viewBox="0 0 7 13"><path d="M3.5 0.5L6.5 5.5H0.5z M3.5 12.5L6.5 7.5H0.5z" fill="#a8a8a8"/></svg>
<svg class="a" style="left:1654px;top:637px" width="14" height="14" viewBox="0 0 14 14"><path d="M5.5 1.5h3v4h4v3h-4v4h-3v-4h-4v-3h4z" fill="#fff" stroke="#222" stroke-width="1"/></svg>
<div class="a " style="left:1679px;top:31px;width:13px;height:956px;background:#5c5c5c;border-radius:6px"></div>
<div class="a " style="left:1679px;top:160px;width:13px;height:827px;background:linear-gradient(90deg,#9a9a9a,#7e7e7e);border:1px solid #3c3c3c;border-radius:6px"></div>
<div class="a " style="left:1692px;top:27px;width:4px;height:963px;background:#7a7a7a"></div>
<div class="a " style="left:1696px;top:27px;width:1px;height:990px;background:#0c0c0c"></div>
<svg class="a" style="left:1682px;top:27px" width="13" height="13" viewBox="0 0 13 13"><path d="M2 0L13 11M6 0L13 7M10 0L13 3" stroke="#b8b8b8" stroke-width="1.2"/><path d="M3.2 0L13 9.8M7.2 0L13 5.8" stroke="#222" stroke-width="0.8"/></svg>
<div class="a " style="left:0px;top:991px;width:1696px;height:26px;background:#727272;border-top:1px solid #898989;border-left:1px solid #808080"></div>
<div class="a menu" style="left:9px;top:994px;width:30px;height:20px;"></div>
<svg class="a" style="left:12.5px;top:996px" width="16" height="16" viewBox="0 0 16 16"><path d="M8 1 L14.5 3.6 V11.6 L8 15 L1.5 11.6 V3.6 Z" fill="#ccc" stroke="#111" stroke-width="1.1"/><path d="M8 6.2 L14.5 3.6 V11.6 L8 15Z" fill="#808080"/><path d="M1.5 3.6 L8 6.2 L14.5 3.6" fill="none" stroke="#fff" stroke-width="1"/><path d="M8 6.2 V15" stroke="#eee" stroke-width="0.9"/><path d="M2.5 4.5 L7.5 6.7 V13.8 L2.5 11.1Z" fill="#e8e8e8"/></svg>
<svg class="a" style="left:29px;top:998px" width="7" height="13" viewBox="0 0 7 13"><path d="M3.5 0.5L6.5 5.5H0.5z M3.5 12.5L6.5 7.5H0.5z" fill="#a8a8a8"/></svg>
<span class="t" style="left:51px;top:999.97px;font-size:11.5px;color:#000;">View</span>
<span class="t" style="left:96px;top:999.97px;font-size:11.5px;color:#000;">Select</span>
<span class="t" style="left:147px;top:999.97px;font-size:11.5px;color:#000;">Add</span>
<span class="t" style="left:186px;top:999.97px;font-size:11.5px;color:#000;">Object</span>
<div class="a menu" style="left:232px;top:994px;width:113px;height:20px;"></div>
<svg class="a" style="left:238px;top:997px" width="13" height="14" viewBox="0 0 13 14"><path d="M6.5 0.8 L12.2 3.6 V10 L6.5 13 L0.8 10 V3.6 Z" fill="#e8a25a" stroke="#3a2a1a" stroke-width="0.9"/><path d="M0.8 3.6 L6.5 6.4 L12.2 3.6" fill="none" stroke="#fff" stroke-width="0.9"/><path d="M6.5 6.4 V13" stroke="#fff" stroke-width="0.9"/><path d="M6.5 6.4 L12.2 3.6 V10 L6.5 13Z" fill="#c47a2e"/></svg>
<span class="t" style="left:256px;top:999.97px;font-size:11.5px;color:#fff;">Object Mode</span>
<svg class="a" style="left:335px;top:998px" width="7" height="13" viewBox="0 0 7 13"><path d="M3.5 0.5L6.5 5.5H0.5z M3.5 12.5L6.5 7.5H0.5z" fill="#a8a8a8"/></svg>
<div class="a menu" style="left:350px;top:994px;width:35px;height:20px;"></div>
<svg class="a" style="left:354.5px;top:996.5px" width="15" height="15" viewBox="0 0 15 15"><defs><radialGradient id="sph" cx="0.35" cy="0.3" r="0.8"><stop offset="0" stop-color="#fff"/><stop offset="0.6" stop-color="#ddd"/><stop offset="1" stop-color="#999"/></radialGradient></defs><circle cx="7.5" cy="7.5" r="6.6" fill="url(#sph)" stroke="#222" stroke-width="0.8"/></svg>
<svg class="a" style="left:375px;top:998px" width="7" height="13" viewBox="0 0 7 13"><path d="M3.5 0.5L6.5 5.5H0.5z M3.5 12.5L6.5 7.5H0.5z" fill="#a8a8a8"/></svg>
<div class="a menu" style="left:390px;top:994px;width:35px;height:20px;border-radius:4px 0 0 4px"></div>
<div class="a toolb" style="left:424px;top:994px;width:21px;height:20px;border-radius:0 4px 4px 0"></div>
<svg class="a" style="left:393px;top:996px" width="17" height="17" viewBox="0 0 17 17"><defs><radialGradient id="pvg" cx="0.35" cy="0.3" r="0.8"><stop offset="0" stop-color="#fff"/><stop offset="1" stop-color="#aaa"/></radialGradient></defs><circle cx="6" cy="5.5" r="4.6" fill="url(#pvg)" stroke="#222" stroke-width="0.9"/><circle cx="10.5" cy="10.8" r="4.6" fill="url(#pvg)" stroke="#222" stroke-width="0.9"/><rect x="6" y="6" width="4.5" height="4.5" fill="#fff" stroke="#1a5ad0" stroke-width="1.4"/></svg>
<svg class="a" style="left:416px;top:998px" width="7" height="13" viewBox="0 0 7 13"><path d="M3.5 0.5L6.5 5.5H0.5z M3.5 12.5L6.5 7.5H0.5z" fill="#a8a8a8"/></svg>
<svg class="a" style="left:426px;top:996px" width="17" height="16" viewBox="0 0 17 16"><circle cx="3.5" cy="2.5" r="1.6" fill="none" stroke="#1a5ad0" stroke-width="1"/><circle cx="8.5" cy="2.5" r="1.6" fill="none" stroke="#1a5ad0" stroke-width="1"/><circle cx="13.5" cy="2.5" r="1.6" fill="none" stroke="#1a5ad0" stroke-width="1"/><path d="M1 10 H16 M1 10 L4.5 6.5 M1 10 L4.5 13.5 M16 10 L12.5 6.5 M16 10 L12.5 13.5" stroke="#222" stroke-width="2.6" fill="none"/><path d="M1 10 H16 M1 10 L4.5 6.5 M1 10 L4.5 13.5 M16 10 L12.5 6.5 M16 10 L12.5 13.5" stroke="#fff" stroke-width="1.2" fill="none"/></svg>
<div class="a menu" style="left:450px;top:994px;width:152px;height:20px;"></div>
<div class="a " style="left:469px;top:994px;width:21px;height:20px;background:linear-gradient(#6a95d8,#5580c6);border:1px solid #262626"></div>
<div class="a " style="left:469px;top:994px;width:1px;height:20px;background:#1e1e1e"></div>
<div class="a " style="left:489px;top:994px;width:1px;height:20px;background:#1e1e1e"></div>
<div class="a " style="left:509px;top:994px;width:1px;height:20px;background:#1e1e1e"></div>
<div class="a " style="left:530px;top:994px;width:1px;height:20px;background:#1e1e1e"></div>
<svg class="a" style="left:451px;top:996px" width="18" height="17" viewBox="0 0 18 17"><path d="M9 9 V1.5" stroke="#222" stroke-width="3"/><path d="M9 9 L2.5 14" stroke="#222" stroke-width="3"/><path d="M9 9 L15.5 14" stroke="#222" stroke-width="3"/><path d="M9 9 V1.5" stroke="#5a8ae0" stroke-width="1.6"/><path d="M9 9 L2.5 14" stroke="#e03a2a" stroke-width="1.6"/><path d="M9 9 L15.5 14" stroke="#5ad03a" stroke-width="1.6"/><circle cx="9" cy="1.8" r="1.3" fill="#fff"/><circle cx="2.5" cy="14" r="1.3" fill="#fff"/><circle cx="15.5" cy="14" r="1.3" fill="#fff"/></svg>
<svg class="a" style="left:472px;top:997px" width="15" height="14" viewBox="0 0 15 14"><path d="M2 12 L11 3" stroke="#1a2a4a" stroke-width="3.2"/><path d="M7 2 H13 V8 Z" fill="#a8c8f8" stroke="#1a2a4a" stroke-width="1"/><path d="M2 12 L11 3" stroke="#a8c8f8" stroke-width="1.6"/></svg>
<svg class="a" style="left:492px;top:997px" width="15" height="14" viewBox="0 0 15 14"><path d="M2 13 Q3 4 13 2" stroke="#1a1a1a" stroke-width="3.4" fill="none"/><path d="M2 13 Q3 4 13 2" stroke="#4a6a9a" stroke-width="2" fill="none"/></svg>
<svg class="a" style="left:512px;top:997px" width="15" height="14" viewBox="0 0 15 14"><path d="M2 13 L9 6" stroke="#1a1a1a" stroke-width="3.2"/><rect x="8" y="1" width="6" height="6" fill="#4a6a9a" stroke="#1a1a1a" stroke-width="1"/><path d="M2 13 L9 6" stroke="#4a6a9a" stroke-width="1.8"/></svg>
<span class="t" style="left:538px;top:999.97px;font-size:11.5px;color:#fff;">Local</span>
<svg class="a" style="left:592px;top:998px" width="7" height="13" viewBox="0 0 7 13"><path d="M3.5 0.5L6.5 5.5H0.5z M3.5 12.5L6.5 7.5H0.5z" fill="#a8a8a8"/></svg>
<div class="a " style="left:607px;top:994px;width:50px;height:20px;background:#999;border:1px solid #262626;border-radius:4px;overflow:hidden"></div>
<div class="a " style="left:608px;top:995px;width:9px;height:9px;background:#626262;border-radius:3px 0 0 0"></div>
<div class="a " style="left:618px;top:995px;width:9px;height:9px;background:#626262;border-radius:0"></div>
<div class="a " style="left:628px;top:995px;width:9px;height:9px;background:#626262;border-radius:0"></div>
<div class="a " style="left:617px;top:994px;width:1px;height:20px;background:#262626"></div>
<div class="a " style="left:627px;top:994px;width:1px;height:20px;background:#262626"></div>
<div class="a " style="left:637px;top:994px;width:1px;height:20px;background:#262626"></div>
<div class="a " style="left:647px;top:994px;width:1px;height:20px;background:#262626"></div>
<div class="a " style="left:607px;top:1004px;width:50px;height:1px;background:#262626"></div>
<svg class="a" style="left:609px;top:996px" width="7" height="7" viewBox="0 0 7 7"><circle cx="3.5" cy="3.5" r="2.5" fill="#f0a040" stroke="#3a2000" stroke-width="0.8"/><circle cx="3.5" cy="3.5" r="1" fill="#ffd090"/></svg>
<svg class="a" style="left:628px;top:996px" width="7" height="7" viewBox="0 0 7 7"><circle cx="3.5" cy="3.5" r="2.5" fill="#5a5a5a" stroke="#222" stroke-width="0.8"/><circle cx="3.5" cy="3.5" r="1" fill="#999"/></svg>
<div class="a " style="left:662px;top:994px;width:50px;height:20px;background:#999;border:1px solid #262626;border-radius:4px;overflow:hidden"></div>
<div class="a " style="left:672px;top:994px;width:1px;height:20px;background:#262626"></div>
<div class="a " style="left:682px;top:994px;width:1px;height:20px;background:#262626"></div>
<div class="a " style="left:692px;top:994px;width:1px;height:20px;background:#262626"></div>
<div class="a " style="left:702px;top:994px;width:1px;height:20px;background:#262626"></div>
<div class="a " style="left:662px;top:1004px;width:50px;height:1px;background:#262626"></div>
<div class="a toolb" style="left:717px;top:994px;width:20px;height:20px;border-radius:4px"></div>
<svg class="a" style="left:719px;top:996px" width="16" height="16" viewBox="0 0 16 16"><rect x="1.5" y="2.5" width="10" height="10" fill="url(#lkg)" stroke="#111" stroke-width="1"/><defs><linearGradient id="lkg" x1="0" y1="0" x2="1" y2="1"><stop offset="0" stop-color="#ddd"/><stop offset="1" stop-color="#888"/></linearGradient></defs><rect x="3" y="10" width="3" height="1" fill="#222"/><rect x="10.5" y="4.5" width="4" height="5" rx="2" fill="none" stroke="#111" stroke-width="2.6"/><rect x="10.5" y="8.5" width="4" height="5" rx="2" fill="none" stroke="#111" stroke-width="2.6"/><rect x="10.5" y="4.5" width="4" height="5" rx="2" fill="none" stroke="#f4f4f4" stroke-width="1.2"/><rect x="10.5" y="8.5" width="4" height="5" rx="2" fill="none" stroke="#f4f4f4" stroke-width="1.2"/></svg>
<div class="a menu" style="left:742px;top:994px;width:56px;height:20px;"></div>
<div class="a " style="left:743px;top:995px;width:19px;height:18px;background:#747474;border-radius:3px 0 0 3px"></div>
<div class="a " style="left:761px;top:994px;width:1px;height:20px;background:#1e1e1e"></div>
<svg class="a" style="left:745px;top:997px" width="14" height="14" viewBox="0 0 14 14"><circle cx="7" cy="7" r="5.8" fill="#6a96e8" stroke="#22356a" stroke-width="1"/><circle cx="7" cy="7" r="3.2" fill="none" stroke="#b8d0ff" stroke-width="1"/><circle cx="7" cy="7" r="1.2" fill="#b8d0ff"/></svg>
<svg class="a" style="left:765px;top:999px" width="16" height="10" viewBox="0 0 16 10"><path d="M1 9 Q4 9 5.5 5 Q7.5 0.5 8 0.5 Q8.5 0.5 10.5 5 Q12 9 15 9" stroke="#ddd" stroke-width="1.3" fill="none"/></svg>
<svg class="a" style="left:788px;top:998px" width="7" height="13" viewBox="0 0 7 13"><path d="M3.5 0.5L6.5 5.5H0.5z M3.5 12.5L6.5 7.5H0.5z" fill="#a8a8a8"/></svg>
<div class="a menu" style="left:802px;top:994px;width:75px;height:20px;"></div>
<div class="a " style="left:803px;top:995px;width:19px;height:18px;background:#999;border-radius:3px 0 0 3px"></div>
<div class="a " style="left:857px;top:995px;width:19px;height:18px;background:#999;border-radius:0 3px 3px 0"></div>
<div class="a " style="left:822px;top:994px;width:1px;height:20px;background:#1e1e1e"></div>
<div class="a " style="left:856px;top:994px;width:1px;height:20px;background:#1e1e1e"></div>
<svg class="a" style="left:804px;top:996px" width="16" height="16" viewBox="0 0 16 16"><g transform="rotate(225 8 8)"><path d="M4.5 3 V8.5 A3.5 3.5 0 0 0 11.5 8.5 V3" fill="none" stroke="#333" stroke-width="3.8"/><path d="M4.5 3 V8.5 A3.5 3.5 0 0 0 11.5 8.5 V3" fill="none" stroke="#d8d8d8" stroke-width="2.2"/><path d="M4.5 3 V5 M11.5 3 V5" stroke="#888" stroke-width="2.2"/></g></svg>
<svg class="a" style="left:825px;top:997px" width="16" height="14" viewBox="0 0 16 14"><path d="M2 2 V12 M14 2 V12 M2 7 H14" stroke="#ccc" stroke-width="1"/><rect x="6.5" y="1" width="3" height="12" rx="1.5" fill="#4a7ae8" stroke="#ddd" stroke-width="0.8"/></svg>
<svg class="a" style="left:847px;top:998px" width="7" height="13" viewBox="0 0 7 13"><path d="M3.5 0.5L6.5 5.5H0.5z M3.5 12.5L6.5 7.5H0.5z" fill="#a8a8a8"/></svg>
<svg class="a" style="left:858px;top:996px" width="17" height="16" viewBox="0 0 17 16"><path d="M3 9 H16 M3 13 H16 M8 5 V16 M12 5 V16" stroke="#eee" stroke-width="1.2"/><circle cx="5" cy="5" r="3.8" fill="#2a6ae0" stroke="#fff" stroke-width="1"/><circle cx="5" cy="5" r="1.5" fill="#fff"/></svg>
<div class="a toolb" style="left:882px;top:994px;width:40px;height:20px;border-radius:4px"></div>
<div class="a " style="left:901px;top:994px;width:1px;height:20px;background:#262626"></div>
<svg class="a" style="left:884px;top:996px" width="17" height="16" viewBox="0 0 17 16"><rect x="1.5" y="4.5" width="13" height="9" rx="1" fill="#ccc" stroke="#222" stroke-width="1"/><circle cx="8.5" cy="9" r="3" fill="#333" stroke="#111" stroke-width="0.8"/><circle cx="8.5" cy="9" r="1.3" fill="#b03030"/><rect x="3" y="6" width="1.5" height="1.5" fill="#e02020"/><circle cx="13.5" cy="3" r="2.5" fill="#e8d040" stroke="#666" stroke-width="0.6"/></svg>
<svg class="a" style="left:903px;top:996px" width="17" height="16" viewBox="0 0 17 16"><rect x="2" y="7" width="13" height="8" fill="#333" stroke="#111" stroke-width="0.8"/><path d="M2 6 L14 1.5 L15 4 L3 8.5Z" fill="#ddd" stroke="#111" stroke-width="0.8"/><rect x="1" y="5" width="2" height="4" fill="#4a7ae8"/><rect x="4" y="9" width="10" height="2" fill="#ddd"/></svg>
<svg class="a" style="left:0px;top:1005px" width="12" height="12" viewBox="0 0 12 12"><path d="M0 1L11 12M0 5L7 12M0 9L3 12" stroke="#b0b0b0" stroke-width="1.2"/><path d="M0 2.2L9.8 12M0 6.2L5.8 12" stroke="#222" stroke-width="0.8"/></svg>
<div class="a " style="left:1697px;top:27px;width:123px;height:963px;background:#727272"></div>
<div class="a " style="left:1697px;top:27px;width:123px;height:21px;background:#6f6f6f"></div>
<div class="a " style="left:1697px;top:48px;width:123px;height:20px;background:#757575"></div>
<div class="a " style="left:1697px;top:68px;width:123px;height:20px;background:#6f6f6f"></div>
<div class="a " style="left:1697px;top:88px;width:123px;height:20px;background:#757575"></div>
<div class="a " style="left:1697px;top:108px;width:123px;height:20px;background:#6f6f6f"></div>
<div class="a " style="left:1697px;top:128px;width:123px;height:20px;background:#757575"></div>
<div class="a " style="left:1697px;top:148px;width:123px;height:20px;background:#6f6f6f"></div>
<div class="a " style="left:1697px;top:168px;width:123px;height:20px;background:#757575"></div>
<div class="a " style="left:1697px;top:188px;width:123px;height:20px;background:#6f6f6f"></div>
<div class="a " style="left:1697px;top:208px;width:123px;height:20px;background:#757575"></div>
<div class="a " style="left:1697px;top:228px;width:123px;height:20px;background:#6f6f6f"></div>
<div class="a " style="left:1697px;top:248px;width:123px;height:20px;background:#757575"></div>
<div class="a " style="left:1697px;top:268px;width:123px;height:20px;background:#6f6f6f"></div>
<div class="a " style="left:1697px;top:288px;width:123px;height:20px;background:#757575"></div>
<div class="a " style="left:1697px;top:308px;width:123px;height:20px;background:#6f6f6f"></div>
<div class="a " style="left:1697px;top:328px;width:123px;height:20px;background:#757575"></div>
<div class="a " style="left:1697px;top:348px;width:123px;height:20px;background:#6f6f6f"></div>
<div class="a " style="left:1697px;top:368px;width:123px;height:20px;background:#757575"></div>
<div class="a " style="left:1697px;top:388px;width:123px;height:20px;background:#6f6f6f"></div>
<div class="a " style="left:1697px;top:408px;width:123px;height:20px;background:#757575"></div>
<div class="a " style="left:1697px;top:428px;width:123px;height:20px;background:#6f6f6f"></div>
<div class="a " style="left:1697px;top:448px;width:123px;height:20px;background:#757575"></div>
<div class="a " style="left:1697px;top:468px;width:123px;height:20px;background:#6f6f6f"></div>
<div class="a " style="left:1697px;top:488px;width:123px;height:20px;background:#757575"></div>
<div class="a " style="left:1697px;top:508px;width:123px;height:20px;background:#6f6f6f"></div>
<div class="a " style="left:1697px;top:528px;width:123px;height:20px;background:#757575"></div>
<div class="a " style="left:1697px;top:548px;width:123px;height:20px;background:#6f6f6f"></div>
<div class="a " style="left:1697px;top:568px;width:123px;height:20px;background:#757575"></div>
<div class="a " style="left:1697px;top:588px;width:123px;height:20px;background:#6f6f6f"></div>
<div class="a " style="left:1697px;top:608px;width:123px;height:20px;background:#757575"></div>
<div class="a " style="left:1697px;top:628px;width:123px;height:20px;background:#6f6f6f"></div>
<div class="a " style="left:1697px;top:648px;width:123px;height:20px;background:#757575"></div>
<div class="a " style="left:1697px;top:668px;width:123px;height:20px;background:#6f6f6f"></div>
<div class="a " style="left:1697px;top:688px;width:123px;height:20px;background:#757575"></div>
<div class="a " style="left:1697px;top:708px;width:123px;height:20px;background:#6f6f6f"></div>
<div class="a " style="left:1697px;top:728px;width:123px;height:20px;background:#757575"></div>
<div class="a " style="left:1697px;top:748px;width:123px;height:20px;background:#6f6f6f"></div>
<div class="a " style="left:1697px;top:768px;width:123px;height:20px;background:#757575"></div>
<div class="a " style="left:1697px;top:788px;width:123px;height:20px;background:#6f6f6f"></div>
<div class="a " style="left:1697px;top:808px;width:123px;height:20px;background:#757575"></div>
<div class="a " style="left:1697px;top:828px;width:123px;height:20px;background:#6f6f6f"></div>
<div class="a " style="left:1697px;top:848px;width:123px;height:20px;background:#757575"></div>
<div class="a " style="left:1697px;top:868px;width:123px;height:20px;background:#6f6f6f"></div>
<div class="a " style="left:1697px;top:888px;width:123px;height:20px;background:#757575"></div>
<div class="a " style="left:1697px;top:908px;width:123px;height:20px;background:#6f6f6f"></div>
<div class="a " style="left:1697px;top:928px;width:123px;height:20px;background:#757575"></div>
<div class="a " style="left:1697px;top:948px;width:123px;height:20px;background:#6f6f6f"></div>
<div class="a " style="left:1697px;top:968px;width:123px;height:20px;background:#757575"></div>
<div class="a " style="left:1697px;top:68px;width:63px;height:20px;background:#7c8186"></div>
<div class="a " style="left:1760px;top:27px;width:1px;height:945px;background:#636363"></div>
<div class="a " style="left:1780px;top:27px;width:1px;height:945px;background:#636363"></div>
<div class="a " style="left:1800px;top:27px;width:1px;height:945px;background:#636363"></div>
<div class="a " style="left:1697px;top:970px;width:123px;height:20px;background:#727272"></div>
<div class="a " style="left:1701px;top:974px;width:114px;height:13px;background:#5a5a5a;border-radius:6px"></div>
<div class="a " style="left:1701px;top:974px;width:46px;height:13px;background:linear-gradient(#a0a0a0,#858585);border:1px solid #3c3c3c;border-radius:6px"></div>
<div class="a " style="left:1724px;top:47px;width:1px;height:131px;background:#333"></div>
<div class="a " style="left:1710px;top:37px;width:9px;height:1px;background:#333"></div>
<svg class="a" style="left:1700px;top:32px" width="11" height="11" viewBox="0 0 11 11"><circle cx="5.5" cy="5.5" r="4.4" fill="#e6e6e6" stroke="#111" stroke-width="1.1"/><rect x="2.9" y="4.85" width="5.2" height="1.3" fill="#111"/></svg>
<svg class="a" style="left:1717.5px;top:28.5px" width="18" height="18" viewBox="0 0 18 18"><circle cx="9" cy="9" r="9" fill="#a4a4a4" fill-opacity="0.85"/></svg>
<svg class="a" style="left:1721px;top:30px" width="14" height="14" viewBox="0 0 14 14"><circle cx="2.2" cy="2.6" r="1.9" fill="#f4f4a0" stroke="#b8b830" stroke-width="0.9"/><path d="M6.5 2.2 Q6.5 0.8 9.6 0.8 Q12.7 0.8 12.7 2.2 V10.6 Q12.7 12 9.6 12 Q6.5 12 6.5 10.6 Z" fill="#3f73c8" stroke="#101830" stroke-width="0.9"/><path d="M7.8 2.5 V10" stroke="#9cc0f0" stroke-width="1.2"/><ellipse cx="9.6" cy="2.3" rx="2.6" ry="1.1" fill="#bcd4f4"/><circle cx="4.8" cy="11" r="3.3" fill="#e6e6e6" stroke="#111" stroke-width="1"/><circle cx="4" cy="10.2" r="1.3" fill="#fff"/></svg>
<span class="t" style="left:1738.5px;top:33.71px;font-size:11.8px;color:#000;width:21.5px;overflow:hidden">Scer</span>
<svg class="a" style="left:1725px;top:52px" width="11" height="11" viewBox="0 0 11 11"><circle cx="5.5" cy="5.5" r="4.4" fill="#e6e6e6" stroke="#111" stroke-width="1.1"/><rect x="2.9" y="4.85" width="5.2" height="1.3" fill="#111"/><rect x="4.85" y="2.9" width="1.3" height="5.2" fill="#111"/></svg>
<svg class="a" style="left:1739px;top:50px" width="16" height="16" viewBox="0 0 16 16"><path d="M3.5 4 L14.5 3 L15.5 14.5 L4.5 15.5Z" fill="#e0d8b8" stroke="#222" stroke-width="0.8"/><rect x="0.5" y="0.5" width="11" height="11" fill="#fff" stroke="#111" stroke-width="0.9"/><rect x="2" y="2" width="8" height="8" fill="#c8d8ec"/><rect x="6" y="2.5" width="3" height="5.5" rx="1" fill="#3a6ac0"/><circle cx="4.8" cy="8.3" r="2" fill="#eee" stroke="#222" stroke-width="0.7"/></svg>
<div class="a " style="left:1759px;top:52px;width:1px;height:11px;background:#111"></div>
<svg class="a" style="left:1738px;top:69px" width="18" height="18" viewBox="0 0 18 18"><circle cx="9" cy="9" r="8.8" fill="#a0a0b8" fill-opacity="0.75"/><circle cx="9" cy="9" r="6.4" fill="#4a82c0" stroke="#0a0a18" stroke-width="1"/><path d="M4 6.5 Q6 3.8 8.5 5 Q8 8.5 5.5 9.5 Z M9.5 9.5 Q13 8.5 13.5 11 Q11.5 14 10 12Z M9 3.3 Q12 3.3 13.5 5.5 L11 6.5Z" fill="#3a7a20"/><circle cx="7" cy="6.5" r="3" fill="#fff" fill-opacity="0.2"/></svg>
<svg class="a" style="left:1758px;top:73px" width="3" height="10" viewBox="0 0 3 10"><path d="M0.5 0.5 L1.5 9.5 L2.5 0.5" stroke="#111" stroke-width="0.9" fill="none"/></svg>
<svg class="a" style="left:1720px;top:92px" width="11" height="11" viewBox="0 0 11 11"><circle cx="5.5" cy="5.5" r="4.4" fill="#e6e6e6" stroke="#111" stroke-width="1.1"/><rect x="2.9" y="4.85" width="5.2" height="1.3" fill="#111"/><rect x="4.85" y="2.9" width="1.3" height="5.2" fill="#111"/></svg>
<div class="a " style="left:1730px;top:98px;width:12px;height:1px;background:#333"></div>
<svg class="a" style="left:1740.5px;top:91.5px" width="13.5" height="13" viewBox="0 0 13.5 13"><path d="M1.5 1.5 H12 L6.75 11.5 Z" fill="none" stroke="#2a1600" stroke-width="3" stroke-linejoin="round"/><path d="M1.5 1.5 H12 L6.75 11.5 Z" fill="none" stroke="#f6a850" stroke-width="1.5" stroke-linejoin="round"/><circle cx="1.5" cy="1.5" r="1.1" fill="#fff"/><circle cx="12" cy="1.5" r="1.1" fill="#fff"/><circle cx="6.75" cy="11.5" r="1.1" fill="#fff"/></svg>
<div class="a " style="left:1759px;top:95px;width:1.2px;height:8px;background:#111"></div>
<svg class="a" style="left:1764px;top:91.3px" width="14" height="12" viewBox="0 0 14 12"><path d="M0.8 6 Q7 -0.5 13.2 6 Q7 12.5 0.8 6Z" fill="#f0f0f0" stroke="#111" stroke-width="0.9"/><circle cx="7" cy="6" r="2.4" fill="#777"/><circle cx="7" cy="6" r="1.1" fill="#111"/></svg>
<svg class="a" style="left:1788px;top:90.8px" width="9.5" height="14" viewBox="0 0 9.5 14"><path d="M0.8 0.8 L0.8 11.5 L3.3 9 L5.8 13.2 L7.6 12.2 L5.3 8.2 L8.8 8.2 Z" fill="#eee" stroke="#111" stroke-width="0.9" stroke-linejoin="round"/></svg>
<svg class="a" style="left:1804px;top:91.8px" width="13" height="12" viewBox="0 0 13 12"><rect x="0.5" y="2" width="12" height="9" rx="1" fill="#ddd" stroke="#111" stroke-width="1"/><rect x="2" y="0.5" width="3" height="2" fill="#ddd" stroke="#111" stroke-width="0.7"/><rect x="1.5" y="4" width="1.5" height="6" fill="#333"/><circle cx="7" cy="6.8" r="2.9" fill="#3a4a7a" stroke="#ccc" stroke-width="0.9"/><circle cx="7.5" cy="7.3" r="1.3" fill="#a03030"/><rect x="2.2" y="3" width="1.3" height="1.3" fill="#f02020"/></svg>
<svg class="a" style="left:1720px;top:112px" width="11" height="11" viewBox="0 0 11 11"><circle cx="5.5" cy="5.5" r="4.4" fill="#e6e6e6" stroke="#111" stroke-width="1.1"/><rect x="2.9" y="4.85" width="5.2" height="1.3" fill="#111"/><rect x="4.85" y="2.9" width="1.3" height="5.2" fill="#111"/></svg>
<div class="a " style="left:1730px;top:118px;width:12px;height:1px;background:#333"></div>
<svg class="a" style="left:1740.5px;top:111.5px" width="13.5" height="13" viewBox="0 0 13.5 13"><path d="M1.5 1.5 H12 L6.75 11.5 Z" fill="none" stroke="#2a1600" stroke-width="3" stroke-linejoin="round"/><path d="M1.5 1.5 H12 L6.75 11.5 Z" fill="none" stroke="#f6a850" stroke-width="1.5" stroke-linejoin="round"/><circle cx="1.5" cy="1.5" r="1.1" fill="#fff"/><circle cx="12" cy="1.5" r="1.1" fill="#fff"/><circle cx="6.75" cy="11.5" r="1.1" fill="#fff"/></svg>
<div class="a " style="left:1759px;top:115px;width:1.2px;height:8px;background:#111"></div>
<svg class="a" style="left:1764px;top:111.3px" width="14" height="12" viewBox="0 0 14 12"><path d="M0.8 6 Q7 -0.5 13.2 6 Q7 12.5 0.8 6Z" fill="#f0f0f0" stroke="#111" stroke-width="0.9"/><circle cx="7" cy="6" r="2.4" fill="#777"/><circle cx="7" cy="6" r="1.1" fill="#111"/></svg>
<svg class="a" style="left:1788px;top:110.8px" width="9.5" height="14" viewBox="0 0 9.5 14"><path d="M0.8 0.8 L0.8 11.5 L3.3 9 L5.8 13.2 L7.6 12.2 L5.3 8.2 L8.8 8.2 Z" fill="#eee" stroke="#111" stroke-width="0.9" stroke-linejoin="round"/></svg>
<svg class="a" style="left:1804px;top:111.8px" width="13" height="12" viewBox="0 0 13 12"><rect x="0.5" y="2" width="12" height="9" rx="1" fill="#ddd" stroke="#111" stroke-width="1"/><rect x="2" y="0.5" width="3" height="2" fill="#ddd" stroke="#111" stroke-width="0.7"/><rect x="1.5" y="4" width="1.5" height="6" fill="#333"/><circle cx="7" cy="6.8" r="2.9" fill="#3a4a7a" stroke="#ccc" stroke-width="0.9"/><circle cx="7.5" cy="7.3" r="1.3" fill="#a03030"/><rect x="2.2" y="3" width="1.3" height="1.3" fill="#f02020"/></svg>
<svg class="a" style="left:1720px;top:132px" width="11" height="11" viewBox="0 0 11 11"><circle cx="5.5" cy="5.5" r="4.4" fill="#e6e6e6" stroke="#111" stroke-width="1.1"/><rect x="2.9" y="4.85" width="5.2" height="1.3" fill="#111"/><rect x="4.85" y="2.9" width="1.3" height="5.2" fill="#111"/></svg>
<div class="a " style="left:1730px;top:138px;width:12px;height:1px;background:#333"></div>
<svg class="a" style="left:1740.5px;top:131.5px" width="13.5" height="13" viewBox="0 0 13.5 13"><path d="M1.5 1.5 H12 L6.75 11.5 Z" fill="none" stroke="#2a1600" stroke-width="3" stroke-linejoin="round"/><path d="M1.5 1.5 H12 L6.75 11.5 Z" fill="none" stroke="#f6a850" stroke-width="1.5" stroke-linejoin="round"/><circle cx="1.5" cy="1.5" r="1.1" fill="#fff"/><circle cx="12" cy="1.5" r="1.1" fill="#fff"/><circle cx="6.75" cy="11.5" r="1.1" fill="#fff"/></svg>
<div class="a " style="left:1759px;top:135px;width:1.2px;height:8px;background:#111"></div>
<svg class="a" style="left:1764px;top:131.3px" width="14" height="12" viewBox="0 0 14 12"><path d="M0.8 6 Q7 -0.5 13.2 6 Q7 12.5 0.8 6Z" fill="#f0f0f0" stroke="#111" stroke-width="0.9"/><circle cx="7" cy="6" r="2.4" fill="#777"/><circle cx="7" cy="6" r="1.1" fill="#111"/></svg>
<svg class="a" style="left:1788px;top:130.8px" width="9.5" height="14" viewBox="0 0 9.5 14"><path d="M0.8 0.8 L0.8 11.5 L3.3 9 L5.8 13.2 L7.6 12.2 L5.3 8.2 L8.8 8.2 Z" fill="#eee" stroke="#111" stroke-width="0.9" stroke-linejoin="round"/></svg>
<svg class="a" style="left:1804px;top:131.8px" width="13" height="12" viewBox="0 0 13 12"><rect x="0.5" y="2" width="12" height="9" rx="1" fill="#ddd" stroke="#111" stroke-width="1"/><rect x="2" y="0.5" width="3" height="2" fill="#ddd" stroke="#111" stroke-width="0.7"/><rect x="1.5" y="4" width="1.5" height="6" fill="#333"/><circle cx="7" cy="6.8" r="2.9" fill="#3a4a7a" stroke="#ccc" stroke-width="0.9"/><circle cx="7.5" cy="7.3" r="1.3" fill="#a03030"/><rect x="2.2" y="3" width="1.3" height="1.3" fill="#f02020"/></svg>
<svg class="a" style="left:1720px;top:152px" width="11" height="11" viewBox="0 0 11 11"><circle cx="5.5" cy="5.5" r="4.4" fill="#e6e6e6" stroke="#111" stroke-width="1.1"/><rect x="2.9" y="4.85" width="5.2" height="1.3" fill="#111"/><rect x="4.85" y="2.9" width="1.3" height="5.2" fill="#111"/></svg>
<div class="a " style="left:1730px;top:158px;width:12px;height:1px;background:#333"></div>
<svg class="a" style="left:1740.5px;top:151.5px" width="13.5" height="13" viewBox="0 0 13.5 13"><path d="M1.5 1.5 H12 L6.75 11.5 Z" fill="none" stroke="#2a1600" stroke-width="3" stroke-linejoin="round"/><path d="M1.5 1.5 H12 L6.75 11.5 Z" fill="none" stroke="#f6a850" stroke-width="1.5" stroke-linejoin="round"/><circle cx="1.5" cy="1.5" r="1.1" fill="#fff"/><circle cx="12" cy="1.5" r="1.1" fill="#fff"/><circle cx="6.75" cy="11.5" r="1.1" fill="#fff"/></svg>
<div class="a " style="left:1759px;top:155px;width:1.2px;height:8px;background:#111"></div>
<svg class="a" style="left:1764px;top:151.3px" width="14" height="12" viewBox="0 0 14 12"><path d="M0.8 6 Q7 -0.5 13.2 6 Q7 12.5 0.8 6Z" fill="#f0f0f0" stroke="#111" stroke-width="0.9"/><circle cx="7" cy="6" r="2.4" fill="#777"/><circle cx="7" cy="6" r="1.1" fill="#111"/></svg>
<svg class="a" style="left:1788px;top:150.8px" width="9.5" height="14" viewBox="0 0 9.5 14"><path d="M0.8 0.8 L0.8 11.5 L3.3 9 L5.8 13.2 L7.6 12.2 L5.3 8.2 L8.8 8.2 Z" fill="#eee" stroke="#111" stroke-width="0.9" stroke-linejoin="round"/></svg>
<svg class="a" style="left:1804px;top:151.8px" width="13" height="12" viewBox="0 0 13 12"><rect x="0.5" y="2" width="12" height="9" rx="1" fill="#ddd" stroke="#111" stroke-width="1"/><rect x="2" y="0.5" width="3" height="2" fill="#ddd" stroke="#111" stroke-width="0.7"/><rect x="1.5" y="4" width="1.5" height="6" fill="#333"/><circle cx="7" cy="6.8" r="2.9" fill="#3a4a7a" stroke="#ccc" stroke-width="0.9"/><circle cx="7.5" cy="7.3" r="1.3" fill="#a03030"/><rect x="2.2" y="3" width="1.3" height="1.3" fill="#f02020"/></svg>
<svg class="a" style="left:1720px;top:172px" width="11" height="11" viewBox="0 0 11 11"><circle cx="5.5" cy="5.5" r="4.4" fill="#e6e6e6" stroke="#111" stroke-width="1.1"/><rect x="2.9" y="4.85" width="5.2" height="1.3" fill="#111"/><rect x="4.85" y="2.9" width="1.3" height="5.2" fill="#111"/></svg>
<div class="a " style="left:1730px;top:178px;width:12px;height:1px;background:#333"></div>
<svg class="a" style="left:1740.5px;top:171.5px" width="13.5" height="13" viewBox="0 0 13.5 13"><path d="M1.5 1.5 H12 L6.75 11.5 Z" fill="none" stroke="#2a1600" stroke-width="3" stroke-linejoin="round"/><path d="M1.5 1.5 H12 L6.75 11.5 Z" fill="none" stroke="#f6a850" stroke-width="1.5" stroke-linejoin="round"/><circle cx="1.5" cy="1.5" r="1.1" fill="#fff"/><circle cx="12" cy="1.5" r="1.1" fill="#fff"/><circle cx="6.75" cy="11.5" r="1.1" fill="#fff"/></svg>
<div class="a " style="left:1759px;top:175px;width:1.2px;height:8px;background:#eee"></div>
<svg class="a" style="left:1764px;top:171.3px" width="14" height="12" viewBox="0 0 14 12"><path d="M0.8 6 Q7 -0.5 13.2 6 Q7 12.5 0.8 6Z" fill="#f0f0f0" stroke="#111" stroke-width="0.9"/><circle cx="7" cy="6" r="2.4" fill="#777"/><circle cx="7" cy="6" r="1.1" fill="#111"/></svg>
<svg class="a" style="left:1788px;top:170.8px" width="9.5" height="14" viewBox="0 0 9.5 14"><path d="M0.8 0.8 L0.8 11.5 L3.3 9 L5.8 13.2 L7.6 12.2 L5.3 8.2 L8.8 8.2 Z" fill="#eee" stroke="#111" stroke-width="0.9" stroke-linejoin="round"/></svg>
<svg class="a" style="left:1804px;top:171.8px" width="13" height="12" viewBox="0 0 13 12"><rect x="0.5" y="2" width="12" height="9" rx="1" fill="#ddd" stroke="#111" stroke-width="1"/><rect x="2" y="0.5" width="3" height="2" fill="#ddd" stroke="#111" stroke-width="0.7"/><rect x="1.5" y="4" width="1.5" height="6" fill="#333"/><circle cx="7" cy="6.8" r="2.9" fill="#3a4a7a" stroke="#ccc" stroke-width="0.9"/><circle cx="7.5" cy="7.3" r="1.3" fill="#a03030"/><rect x="2.2" y="3" width="1.3" height="1.3" fill="#f02020"/></svg>
<svg class="a" style="left:1805px;top:27px" width="14" height="13" viewBox="0 0 14 13"><path d="M2 0L14 12M6 0L14 8M10 0L14 4" stroke="#b8b8b8" stroke-width="1.2"/><path d="M3.2 0L14 10.8M7.2 0L14 6.8" stroke="#222" stroke-width="0.8"/></svg>
<div class="a " style="left:1697px;top:991px;width:123px;height:26px;background:#727272;border-top:1px solid #898989"></div>
<div class="a menu" style="left:1705px;top:995px;width:30px;height:20px;"></div>
<svg class="a" style="left:1708px;top:997px" width="14" height="15" viewBox="0 0 14 15"><rect x="1" y="1" width="6" height="2.5" fill="#f0a040" stroke="#222" stroke-width="0.6"/><path d="M3 3.5 V13 H6 M3 8.5 H6" stroke="#8ab0e0" stroke-width="0.9" fill="none"/><rect x="6.5" y="7.5" width="6" height="2" fill="#fff"/><rect x="6.5" y="12" width="6" height="2" fill="#fff"/></svg>
<svg class="a" style="left:1725px;top:999px" width="7" height="13" viewBox="0 0 7 13"><path d="M3.5 0.5L6.5 5.5H0.5z M3.5 12.5L6.5 7.5H0.5z" fill="#a8a8a8"/></svg>
<span class="t" style="left:1747px;top:999.97px;font-size:11.5px;color:#000;">View</span>
<span class="t" style="left:1792px;top:999.97px;font-size:11.5px;color:#000;">Searc</span>
<div class="a " style="left:1820px;top:27px;width:1px;height:990px;background:#0c0c0c"></div>
<svg class="a" style="left:1697px;top:1005px" width="12" height="12" viewBox="0 0 12 12"><path d="M0 1L11 12M0 5L7 12M0 9L3 12" stroke="#b0b0b0" stroke-width="1.2"/><path d="M0 2.2L9.8 12M0 6.2L5.8 12" stroke="#222" stroke-width="0.8"/></svg>
<div class="a " style="left:1821px;top:27px;width:99px;height:990px;background:#727272"></div>
<div class="a " style="left:1917px;top:54px;width:3px;height:963px;background:#767676"></div>
<div class="a " style="left:1821px;top:27px;width:99px;height:26px;background:#6b6b6b"></div>
<div class="a " style="left:1821px;top:53px;width:99px;height:1px;background:#5e5e5e;box-shadow:0 1px 0 #7e7e7e"></div>
<div class="a menu" style="left:1830px;top:30px;width:30px;height:20px;"></div>
<svg class="a" style="left:1834px;top:33px" width="14" height="14" viewBox="0 0 14 14"><rect x="1" y="1" width="12" height="4.5" rx="2" fill="#555" stroke="#111" stroke-width="0.8"/><rect x="8" y="1.5" width="4.5" height="3.5" rx="1.5" fill="#ddd"/><rect x="1" y="8" width="12" height="4.5" rx="2" fill="#ddd" stroke="#111" stroke-width="0.8"/><path d="M3.5 10.25 L5 9 V11.5Z M10.5 10.25 L9 9 V11.5Z" fill="#111"/></svg>
<svg class="a" style="left:1850px;top:34px" width="7" height="13" viewBox="0 0 7 13"><path d="M3.5 0.5L6.5 5.5H0.5z M3.5 12.5L6.5 7.5H0.5z" fill="#a8a8a8"/></svg>
<div class="a menu" style="left:1868px;top:30px;width:60px;height:20px;"></div>
<div class="a " style="left:1887px;top:30px;width:1px;height:20px;background:#222"></div>
<div class="a " style="left:1907px;top:30px;width:1px;height:20px;background:#222"></div>
<svg class="a" style="left:1870.5px;top:32.5px" width="15" height="14" viewBox="0 0 15 14"><rect x="1" y="1" width="3" height="2.5" rx="1" fill="#ddd" stroke="#111" stroke-width="0.7"/><rect x="0.5" y="2.8" width="14" height="10.2" rx="1" fill="#bbb" stroke="#111" stroke-width="1"/><rect x="1.5" y="6.5" width="4" height="5.5" fill="#3a3a3a"/><circle cx="8.5" cy="8.3" r="3.6" fill="#ccc" stroke="#222" stroke-width="0.6"/><circle cx="8.5" cy="8.3" r="2.6" fill="#5a3a3a"/><path d="M6 7 A2.6 2.6 0 0 1 9 5.7 L8.5 8.3Z" fill="#3a4a8a"/><circle cx="4" cy="4.5" r="0.8" fill="#f02020"/><rect x="11.5" y="4" width="2" height="1.5" fill="#222"/></svg>
<svg class="a" style="left:1889px;top:32px" width="16" height="16" viewBox="0 0 16 16"><path d="M4 6 L14.5 4.5 L15.5 14.5 L5 15.5Z" fill="#d8d4b8" stroke="#222" stroke-width="0.8"/><rect x="0.8" y="0.8" width="11" height="11" fill="#eee" stroke="#111" stroke-width="1"/><rect x="2" y="2" width="8.6" height="8.6" fill="#b8c8dc"/><rect x="6.3" y="2.3" width="3" height="6.5" rx="1.2" fill="#3f6fb8" stroke="#111" stroke-width="0.5"/><circle cx="4.8" cy="8.6" r="2" fill="#ddd" stroke="#222" stroke-width="0.7"/><circle cx="2.8" cy="2.8" r="1" fill="#c8b040"/></svg>
<svg class="a" style="left:1908px;top:32px" width="12" height="16" viewBox="0 0 12 16"><circle cx="3" cy="3" r="1.6" fill="none" stroke="#b8b840" stroke-width="0.9"/><circle cx="5.5" cy="10.5" r="3.3" fill="#ccc" stroke="#111" stroke-width="0.9"/><rect x="8.5" y="1" width="4" height="9" fill="#4a7ac8"/></svg>
<svg class="a" style="left:1907px;top:27px" width="13" height="13" viewBox="0 0 13 13"><path d="M1 0L13 12M5 0L13 8M9 0L13 4" stroke="#111" stroke-width="1.1"/><path d="M0 1L12 13M4 1L12 9M8 1L12 5" stroke="#ddd" stroke-width="0.7" opacity="0.7"/></svg>
<svg class="a" style="left:1828px;top:62px" width="18" height="18" viewBox="0 0 18 18"><g stroke-linecap="butt"><path d="M1.5 16.5 L7 11" stroke="#111" stroke-width="2.6"/><path d="M3.8 8 L10 14.2 M7 11 L12 6 M10 3 L15 8" stroke="#111" stroke-width="4.4"/><path d="M1.8 16.2 L7 11" stroke="#ddd" stroke-width="1.1"/><path d="M4.5 8.7 L9.3 13.5" stroke="#eee" stroke-width="2.4"/><path d="M7 11 L12 6" stroke="#e4e4e4" stroke-width="2.6"/><path d="M10.7 3.7 L14.3 7.3" stroke="#f4f4f4" stroke-width="2.4"/></g></svg>
<svg class="a" style="left:1851px;top:63px" width="14" height="16" viewBox="0 0 14 16"><circle cx="2.2" cy="2.6" r="1.9" fill="#f4f4a0" stroke="#b8b830" stroke-width="0.9"/><path d="M6.5 2.2 Q6.5 0.8 9.6 0.8 Q12.7 0.8 12.7 2.2 V10.6 Q12.7 12 9.6 12 Q6.5 12 6.5 10.6 Z" fill="#3f73c8" stroke="#101830" stroke-width="0.9"/><path d="M7.8 2.5 V10" stroke="#9cc0f0" stroke-width="1.2"/><ellipse cx="9.6" cy="2.3" rx="2.6" ry="1.1" fill="#bcd4f4"/><circle cx="4.8" cy="11" r="3.3" fill="#e6e6e6" stroke="#111" stroke-width="1"/><circle cx="4" cy="10.2" r="1.3" fill="#fff"/></svg>
<svg class="a" style="left:1867px;top:68px" width="5" height="7" viewBox="0 0 5 7"><path d="M0.5 0.5 V6.5 L4.5 3.5Z" fill="#333"/></svg>
<svg class="a" style="left:1883px;top:64px" width="13" height="14" viewBox="0 0 13 14"><path d="M6.5 0.8 L12.2 3.6 V10 L6.5 13 L0.8 10 V3.6 Z" fill="#e8a25a" stroke="#3a2a1a" stroke-width="0.9"/><path d="M0.8 3.6 L6.5 6.4 L12.2 3.6" fill="none" stroke="#fff" stroke-width="0.9"/><path d="M6.5 6.4 V13" stroke="#fff" stroke-width="0.9"/><path d="M6.5 6.4 L12.2 3.6 V10 L6.5 13Z" fill="#c47a2e"/></svg>
<span class="t" style="left:1901px;top:66.97px;font-size:11.5px;color:#000;">R</span>
<div class="a menu" style="left:1829px;top:97px;width:82px;height:20px;"></div>
<span class="t" style="left:1837px;top:103.39px;font-size:11px;color:#fff;">Add Modifier</span>
<svg class="a" style="left:1902px;top:101px" width="7" height="13" viewBox="0 0 7 13"><path d="M3.5 0.5L6.5 5.5H0.5z M3.5 12.5L6.5 7.5H0.5z" fill="#a8a8a8"/></svg>
<div class="a " style="left:1829px;top:122px;width:82px;height:234px;background:#6e6e6e;border:1px solid #4e4e4e;border-radius:5px"></div>
<div class="a " style="left:1830px;top:154px;width:80px;height:1px;background:#3e3e3e;box-shadow:0 1px 0 #808080"></div>
<svg class="a" style="left:1838px;top:136px" width="12" height="9" viewBox="0 0 12 9"><path d="M1 1 H11 L6 7.5Z" fill="#eee" stroke="#222" stroke-width="0.9" stroke-linejoin="round"/></svg>
<svg class="a" style="left:1865px;top:131px" width="18" height="17" viewBox="0 0 18 17"><path d="M8.5 1.5 L15.5 3.5 V15 L8.5 12.5Z" fill="#a8c0e8" stroke="#1a3a7a" stroke-width="1"/><path d="M10.5 4.5 Q14 8.5 10.5 12" fill="none" stroke="#eef4ff" stroke-width="1.1"/><circle cx="4.8" cy="12" r="3.6" fill="#ececec" stroke="#111" stroke-width="1"/><circle cx="4" cy="11.2" r="1.4" fill="#fff"/></svg>
<div class="a " style="left:1890px;top:131px;width:35px;height:19px;background:linear-gradient(#a3a3a3,#adadad);border:1px solid #3a3a3a;border-radius:4px"></div>
<span class="t" style="left:1898px;top:135.97px;font-size:11.5px;color:#000;">Mirr</span>
<div class="a toolb" style="left:1834px;top:163px;width:32px;height:20px;border-radius:4px"></div>
<span class="t" style="left:1836px;top:168.97px;font-size:11.5px;color:#000;">Apply</span>
<div class="a toolb" style="left:1874px;top:163px;width:32px;height:20px;border-radius:4px"></div>
<span class="t" style="left:1877px;top:168.97px;font-size:11.5px;color:#000;">Copy</span>
<span class="t" style="left:1864px;top:196.97px;font-size:11.5px;color:#000;">O</span>
<span class="t" style="left:1893px;top:196.97px;font-size:11.5px;color:#000;">Te</span>
<div class="a " style="left:1837px;top:216px;width:14px;height:14px;background:linear-gradient(#383838,#525252);border:1px solid #222;border-radius:3px;box-shadow:0 1px 0 rgba(255,255,255,0.13)"></div>
<svg class="a" style="left:1837px;top:216px" width="14" height="14" viewBox="0 0 14 14"><path d="M3.6 5.6 L7 8.6 L13.2 1" fill="none" stroke="#cccccc" stroke-width="1.8" stroke-linecap="square" stroke-linejoin="miter"/></svg>
<div class="a " style="left:1859px;top:216px;width:14px;height:14px;background:linear-gradient(#383838,#525252);border:1px solid #222;border-radius:3px;box-shadow:0 1px 0 rgba(255,255,255,0.13)"></div>
<svg class="a" style="left:1859px;top:216px" width="14" height="14" viewBox="0 0 14 14"><path d="M3.6 5.6 L7 8.6 L13.2 1" fill="none" stroke="#cccccc" stroke-width="1.8" stroke-linecap="square" stroke-linejoin="miter"/></svg>
<div class="a " style="left:1888px;top:216px;width:14px;height:14px;background:linear-gradient(#545454,#3c3c3c);border:1px solid #222;border-radius:3px;box-shadow:0 1px 0 rgba(255,255,255,0.13)"></div>
<div class="a " style="left:1837px;top:238px;width:14px;height:14px;background:linear-gradient(#545454,#3c3c3c);border:1px solid #222;border-radius:3px;box-shadow:0 1px 0 rgba(255,255,255,0.13)"></div>
<div class="a " style="left:1859px;top:238px;width:14px;height:14px;background:linear-gradient(#545454,#3c3c3c);border:1px solid #222;border-radius:3px;box-shadow:0 1px 0 rgba(255,255,255,0.13)"></div>
<div class="a " style="left:1888px;top:238px;width:14px;height:14px;background:linear-gradient(#545454,#3c3c3c);border:1px solid #222;border-radius:3px;box-shadow:0 1px 0 rgba(255,255,255,0.13)"></div>
<div class="a " style="left:1837px;top:260px;width:14px;height:14px;background:linear-gradient(#545454,#3c3c3c);border:1px solid #222;border-radius:3px;box-shadow:0 1px 0 rgba(255,255,255,0.13)"></div>
<div class="a " style="left:1859px;top:260px;width:14px;height:14px;background:linear-gradient(#383838,#525252);border:1px solid #222;border-radius:3px;box-shadow:0 1px 0 rgba(255,255,255,0.13)"></div>
<svg class="a" style="left:1859px;top:260px" width="14" height="14" viewBox="0 0 14 14"><path d="M3.6 5.6 L7 8.6 L13.2 1" fill="none" stroke="#cccccc" stroke-width="1.8" stroke-linecap="square" stroke-linejoin="miter"/></svg>
<div class="a num" style="left:1834px;top:280px;width:72px;height:19px;border-radius:8px"></div>
<svg class="a" style="left:1840px;top:286px" width="5" height="8" viewBox="0 0 5 8"><path d="M4.5 0.5V7.5L0.5 4Z" fill="#8c8c8c"/></svg>
<svg class="a" style="left:1896px;top:286px" width="5" height="8" viewBox="0 0 5 8"><path d="M0.5 0.5V7.5L4.5 4Z" fill="#8c8c8c"/></svg>
<span class="t" style="left:1852px;top:284.97px;font-size:11.5px;color:#000;letter-spacing:0.3px">0.0010</span>
<span class="t" style="left:1842px;top:306.97px;font-size:11.5px;color:#000;">Mirror Obje</span>
<div class="a " style="left:1834px;top:323px;width:72px;height:20px;background:linear-gradient(#a3a3a3,#b3b3b3);border:1px solid #3a3a3a;border-radius:4px"></div>
<svg class="a" style="left:1840px;top:326px" width="13" height="14" viewBox="0 0 13 14"><path d="M6.5 0.8 L12.2 3.6 V10 L6.5 13 L0.8 10 V3.6 Z" fill="#e8a25a" stroke="#3a2a1a" stroke-width="0.9"/><path d="M0.8 3.6 L6.5 6.4 L12.2 3.6" fill="none" stroke="#fff" stroke-width="0.9"/><path d="M6.5 6.4 V13" stroke="#fff" stroke-width="0.9"/><path d="M6.5 6.4 L12.2 3.6 V10 L6.5 13Z" fill="#c47a2e"/></svg>
<svg class="a" style="left:1890px;top:326px" width="14" height="14" viewBox="0 0 14 14"><path d="M1.5 12.5 L2.5 9.5 L8 4 L10 6 L4.5 11.5 Z" fill="#ddd" stroke="#222" stroke-width="0.8"/><path d="M8 2.5 L10.5 0.5 L13 3 L11 5.5 Z" fill="#222"/><path d="M7 3 L11 7" stroke="#222" stroke-width="1.6"/></svg>
<svg class="a" style="left:1821px;top:1005px" width="12" height="12" viewBox="0 0 12 12"><path d="M0 1L11 12M0 5L7 12M0 9L3 12" stroke="#b0b0b0" stroke-width="1.2"/><path d="M0 2.2L9.8 12M0 6.2L5.8 12" stroke="#222" stroke-width="0.8"/></svg>
</body></html>
